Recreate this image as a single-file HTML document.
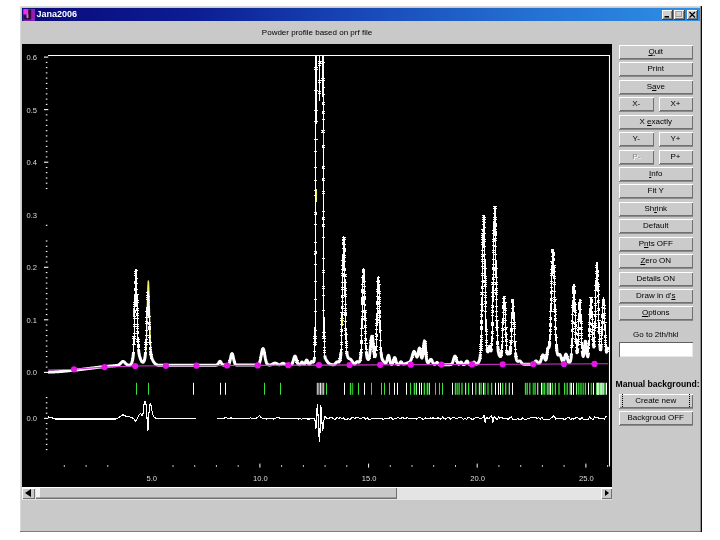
<!DOCTYPE html>
<html><head><meta charset="utf-8"><title>Jana2006</title>
<style>
html,body{margin:0;padding:0;background:#fff;}
body{width:720px;height:540px;position:relative;overflow:hidden;font-family:"Liberation Sans",sans-serif;font-size:8px;color:#000;}
.win{position:absolute;left:20px;top:6px;width:682px;height:526px;background:#c9c9c9;box-shadow:inset -1.3px 0 0 #0a0a0a, inset 0 -1.1px 0 #7c7c7c, inset 1px 1px 0 #dadada;}
.title{position:absolute;left:22px;top:8px;width:677.5px;height:13px;background:linear-gradient(90deg,#0a0a7a 0%,#0c1c92 25%,#1848b8 50%,#2470d2 75%,#2e90e6 100%);}
.tt{position:absolute;left:36.5px;top:8px;height:13px;line-height:13.5px;font-size:9px;font-weight:bold;color:#fff;letter-spacing:0px}
.cap{position:absolute;top:10px;width:11px;height:9.5px;background:#d0d0d0;box-shadow:inset -1px -1px 0 #404040, inset 1px 1px 0 #fff, inset -2px -2px 0 #808080;}
.sub{position:absolute;left:22px;width:590px;top:28px;height:10px;line-height:10px;text-align:center;font-size:8px;}
.plot{position:absolute;left:22px;top:44px;display:block}
.btn{position:absolute;height:14px;line-height:13.4px;text-align:center;font-size:8px;background:#cbcbcb;box-sizing:border-box;box-shadow:inset 1px 1px 0 #fff, inset -1px -1px 0 #707070, 0 1px 0 #8a8a8a;white-space:nowrap}
.btn u{text-decoration:underline}
.btn.dis{color:#888;text-shadow:1px 1px 0 #fff}
.btn.focus i{position:absolute;left:2.5px;right:2.5px;top:0.5px;bottom:0.5px;border-left:1px dotted #000;border-right:1px dotted #000}
.lab{position:absolute;font-size:8px;white-space:nowrap}
.inp{position:absolute;left:619px;top:342px;width:73.5px;height:14.5px;background:#fff;box-sizing:border-box;box-shadow:inset 1px 1px 0 #606060, inset -1px -1px 0 #e8e8e8}
.sb{position:absolute;left:22px;top:486.8px;width:590px;height:13.2px;background:#e4e4e4;border-top:1.6px solid #fff;box-sizing:border-box}
.sbb{position:absolute;top:0;width:12.5px;height:11.6px;background:#c9c9c9;box-shadow:inset 1px 1px 0 #fff, inset -1px -1px 0 #707070}
.thumb{position:absolute;left:13.5px;top:0;width:361.5px;height:11.6px;background:linear-gradient(90deg,#f4f4f4 0,#f4f4f4 4.5px,#c9c9c9 4.5px);box-shadow:inset -1px -1.6px 0 #707070}
.arr{position:absolute;width:0;height:0;border-style:solid}
.wrap{position:absolute;left:0;top:0;width:720px;height:540px;will-change:transform}
</style></head><body><div class="wrap">
<div class="win"></div>
<div class="title"></div>
<svg style="position:absolute;left:22px;top:8px" width="13" height="13" viewBox="22 8 13 13"><rect x="22" y="8" width="13" height="13" fill="#10107c"/><rect x="23.3" y="9" width="11.7" height="11.6" fill="#cc26d4"/><rect x="23.6" y="9.2" width="4.3" height="5.2" fill="#f42cf4"/><rect x="23.3" y="14.6" width="5.4" height="5.1" fill="#2a0a48"/><rect x="28.3" y="9.4" width="3.1" height="10.2" fill="#2a0838"/><rect x="26.5" y="14.2" width="1.9" height="3.8" fill="#c878cc"/><rect x="31.6" y="9" width="3.4" height="10.6" fill="#6a1a98" opacity=".6"/></svg>
<div class="tt">Jana2006</div>
<div class="cap" style="left:662px"><svg width="11" height="10" style="position:absolute;left:0;top:0"><rect x="2.5" y="6" width="4.5" height="1.6" fill="#000"/></svg></div>
<div class="cap" style="left:673.5px"><svg width="11" height="10" style="position:absolute;left:0;top:0"><rect x="2.5" y="2" width="5.5" height="5" fill="none" stroke="#f4f4f4" stroke-width="1"/><rect x="2" y="1.6" width="5.5" height="5" fill="none" stroke="#909090" stroke-width=".9"/></svg></div>
<div class="cap" style="left:687px"><svg width="11" height="10" style="position:absolute;left:0;top:0"><path d="M2.5 2 L8 7.5 M8 2 L2.5 7.5" stroke="#000" stroke-width="1.3" fill="none"/></svg></div>
<div class="sub">Powder profile based on prf file</div>
<svg class="plot" width="590" height="443" viewBox="22 44 590 443">
<defs><clipPath id="cp"><rect x="47" y="55.2" width="563" height="330"/></clipPath></defs>
<rect x="22" y="44" width="590" height="443" fill="#000"/>
<g stroke="#fff" stroke-width="1.1" fill="none">
<line x1="48" x2="610" y1="55.5" y2="55.5"/><line x1="609.5" x2="609.5" y1="55" y2="466.5"/>
<line x1="44" x2="48.3" y1="372.4" y2="372.4"/><line x1="45.8" x2="47.4" y1="367.1" y2="367.1"/><line x1="45.8" x2="47.4" y1="361.9" y2="361.9"/><line x1="45.8" x2="47.4" y1="356.6" y2="356.6"/><line x1="45.8" x2="47.4" y1="351.4" y2="351.4"/><line x1="45.8" x2="47.4" y1="346.1" y2="346.1"/><line x1="45.8" x2="47.4" y1="340.9" y2="340.9"/><line x1="45.8" x2="47.4" y1="335.6" y2="335.6"/><line x1="45.8" x2="47.4" y1="330.4" y2="330.4"/><line x1="45.8" x2="47.4" y1="325.1" y2="325.1"/><line x1="44" x2="48.3" y1="319.8" y2="319.8"/><line x1="45.8" x2="47.4" y1="314.6" y2="314.6"/><line x1="45.8" x2="47.4" y1="309.3" y2="309.3"/><line x1="45.8" x2="47.4" y1="304.1" y2="304.1"/><line x1="45.8" x2="47.4" y1="298.8" y2="298.8"/><line x1="45.8" x2="47.4" y1="293.6" y2="293.6"/><line x1="45.8" x2="47.4" y1="288.3" y2="288.3"/><line x1="45.8" x2="47.4" y1="283.1" y2="283.1"/><line x1="45.8" x2="47.4" y1="277.8" y2="277.8"/><line x1="45.8" x2="47.4" y1="272.6" y2="272.6"/><line x1="44" x2="48.3" y1="267.3" y2="267.3"/><line x1="45.8" x2="47.4" y1="262.0" y2="262.0"/><line x1="45.8" x2="47.4" y1="256.8" y2="256.8"/><line x1="45.8" x2="47.4" y1="251.5" y2="251.5"/><line x1="45.8" x2="47.4" y1="246.3" y2="246.3"/><line x1="45.8" x2="47.4" y1="241.0" y2="241.0"/><line x1="45.8" x2="47.4" y1="225.3" y2="225.3"/><line x1="45.8" x2="47.4" y1="188.5" y2="188.5"/><line x1="45.8" x2="47.4" y1="183.2" y2="183.2"/><line x1="45.8" x2="47.4" y1="178.0" y2="178.0"/><line x1="45.8" x2="47.4" y1="172.7" y2="172.7"/><line x1="45.8" x2="47.4" y1="167.5" y2="167.5"/><line x1="44" x2="48.3" y1="162.2" y2="162.2"/><line x1="45.8" x2="47.4" y1="156.9" y2="156.9"/><line x1="45.8" x2="47.4" y1="151.7" y2="151.7"/><line x1="45.8" x2="47.4" y1="146.4" y2="146.4"/><line x1="45.8" x2="47.4" y1="141.2" y2="141.2"/><line x1="45.8" x2="47.4" y1="135.9" y2="135.9"/><line x1="45.8" x2="47.4" y1="130.7" y2="130.7"/><line x1="45.8" x2="47.4" y1="125.4" y2="125.4"/><line x1="45.8" x2="47.4" y1="120.2" y2="120.2"/><line x1="45.8" x2="47.4" y1="114.9" y2="114.9"/><line x1="44" x2="48.3" y1="109.6" y2="109.6"/><line x1="45.8" x2="47.4" y1="104.4" y2="104.4"/><line x1="45.8" x2="47.4" y1="99.1" y2="99.1"/><line x1="45.8" x2="47.4" y1="93.9" y2="93.9"/><line x1="45.8" x2="47.4" y1="88.6" y2="88.6"/><line x1="45.8" x2="47.4" y1="83.4" y2="83.4"/><line x1="45.8" x2="47.4" y1="78.1" y2="78.1"/><line x1="45.8" x2="47.4" y1="72.9" y2="72.9"/><line x1="45.8" x2="47.4" y1="67.6" y2="67.6"/><line x1="45.8" x2="47.4" y1="62.4" y2="62.4"/><line x1="44" x2="48.3" y1="57.1" y2="57.1"/><line x1="45.8" x2="47.4" y1="449.6" y2="449.6"/><line x1="45.8" x2="47.4" y1="444.4" y2="444.4"/><line x1="45.8" x2="47.4" y1="439.2" y2="439.2"/><line x1="45.8" x2="47.4" y1="434.0" y2="434.0"/><line x1="45.8" x2="47.4" y1="428.8" y2="428.8"/><line x1="45.8" x2="47.4" y1="423.6" y2="423.6"/><line x1="44" x2="48.3" y1="418.4" y2="418.4"/><line x1="45.8" x2="47.4" y1="413.2" y2="413.2"/><line x1="45.8" x2="47.4" y1="408.0" y2="408.0"/><line x1="45.8" x2="47.4" y1="402.8" y2="402.8"/><line x1="45.8" x2="47.4" y1="397.6" y2="397.6"/>
</g>
<g stroke-width="1" fill="none"><line x1="64.3" x2="64.3" y1="465" y2="467" stroke="#c4c4c4"/><line x1="86.1" x2="86.1" y1="465" y2="467" stroke="#c4c4c4"/><line x1="107.8" x2="107.8" y1="465" y2="467" stroke="#c4c4c4"/><line x1="173.0" x2="173.0" y1="465" y2="467" stroke="#c4c4c4"/><line x1="194.7" x2="194.7" y1="465" y2="467" stroke="#c4c4c4"/><line x1="216.4" x2="216.4" y1="465" y2="467" stroke="#c4c4c4"/><line x1="238.2" x2="238.2" y1="465" y2="467" stroke="#c4c4c4"/><line x1="259.9" x2="259.9" y1="463.6" y2="467.6" stroke="#fff"/><line x1="281.6" x2="281.6" y1="465" y2="467" stroke="#c4c4c4"/><line x1="303.4" x2="303.4" y1="465" y2="467" stroke="#c4c4c4"/><line x1="325.1" x2="325.1" y1="465" y2="467" stroke="#c4c4c4"/><line x1="346.8" x2="346.8" y1="465" y2="467" stroke="#c4c4c4"/><line x1="368.6" x2="368.6" y1="463.6" y2="467.6" stroke="#fff"/><line x1="390.3" x2="390.3" y1="465" y2="467" stroke="#c4c4c4"/><line x1="412.0" x2="412.0" y1="465" y2="467" stroke="#c4c4c4"/><line x1="433.7" x2="433.7" y1="465" y2="467" stroke="#c4c4c4"/><line x1="455.5" x2="455.5" y1="465" y2="467" stroke="#c4c4c4"/><line x1="477.2" x2="477.2" y1="463.6" y2="467.6" stroke="#fff"/><line x1="498.9" x2="498.9" y1="465" y2="467" stroke="#c4c4c4"/><line x1="520.7" x2="520.7" y1="465" y2="467" stroke="#c4c4c4"/><line x1="542.4" x2="542.4" y1="465" y2="467" stroke="#c4c4c4"/><line x1="564.1" x2="564.1" y1="465" y2="467" stroke="#c4c4c4"/><line x1="585.9" x2="585.9" y1="463.6" y2="467.6" stroke="#fff"/><line x1="607.6" x2="607.6" y1="465" y2="467" stroke="#c4c4c4"/></g>
<g clip-path="url(#cp)" fill="none" stroke-linejoin="round">
<polyline points="145.6,354.4 145.8,351.3 146.1,347.1 146.3,341.4 146.6,334.2 146.8,325.6 147.1,315.8 147.3,305.6 147.6,296.0 147.8,288.1 148.1,282.8 148.3,280.9 148.6,282.8 148.8,287.9 149.1,295.7 149.3,305.1 149.6,315.0 149.8,324.4 150.1,332.7 150.3,339.5 150.6,344.9 150.8,348.8 151.1,351.6 151.3,353.6 151.6,355.0 151.8,356.1" stroke="#f0f060" stroke-width="1.3"/>
<polyline points="48.0,372.2 48.2,372.2 48.5,372.2 48.8,372.2 49.0,372.1 49.2,372.1 49.5,372.1 49.8,372.1 50.0,372.1 50.2,372.1 50.5,372.1 50.8,372.1 51.0,372.1 51.2,372.0 51.5,372.0 51.8,372.0 52.0,372.0 52.2,372.0 52.5,372.0 52.8,372.0 53.0,371.9 53.2,371.9 53.5,371.9 53.8,371.9 54.0,371.9 54.2,371.9 54.5,371.9 54.8,371.9 55.0,371.9 55.2,371.8 55.5,371.8 55.8,371.8 56.0,371.8 56.2,371.8 56.5,371.8 56.8,371.8 57.0,371.8 57.2,371.7 57.5,371.7 57.8,371.7 58.0,371.7 58.2,371.7 58.5,371.7 58.8,371.7 59.0,371.7 59.2,371.6 59.5,371.6 59.8,371.6 60.0,371.6 60.2,371.6 60.5,371.6 60.8,371.5 61.0,371.5 61.2,371.5 61.5,371.5 61.8,371.4 62.0,371.4 62.2,371.4 62.5,371.4 62.8,371.3 63.0,371.3 63.2,371.3 63.5,371.2 63.8,371.2 64.0,371.2 64.2,371.2 64.5,371.2 64.8,371.1 65.0,371.1 65.2,371.1 65.5,371.1 65.8,371.0 66.0,371.0 66.2,371.0 66.5,371.0 66.8,370.9 67.0,370.9 67.2,370.9 67.5,370.9 67.8,370.8 68.0,370.8 68.2,370.8 68.5,370.8 68.8,370.7 69.0,370.7 69.2,370.7 69.5,370.7 69.8,370.6 70.0,370.6 70.2,370.6 70.5,370.6 70.8,370.5 71.0,370.5 71.2,370.5 71.5,370.5 71.8,370.4 72.0,370.4 72.2,370.4 72.5,370.4 72.8,370.3 73.0,370.3 73.2,370.3 73.5,370.2 73.8,370.2 74.0,370.2 74.2,370.2 74.5,370.2 74.8,370.1 75.0,370.1 75.2,370.1 75.5,370.1 75.8,370.0 76.0,370.0 76.2,370.0 76.5,370.0 76.8,369.9 77.0,369.9 77.2,369.9 77.5,369.9 77.8,369.8 78.0,369.8 78.2,369.8 78.5,369.8 78.8,369.7 79.0,369.7 79.2,369.7 79.5,369.7 79.8,369.6 80.0,369.6 80.2,369.6 80.5,369.5 80.8,369.5 81.0,369.5 81.2,369.4 81.5,369.4 81.8,369.4 82.0,369.4 82.2,369.3 82.5,369.3 82.8,369.3 83.0,369.2 83.2,369.2 83.5,369.2 83.8,369.1 84.0,369.1 84.2,369.1 84.5,369.0 84.8,369.0 85.0,369.0 85.2,368.9 85.5,368.9 85.8,368.9 86.0,368.9 86.2,368.8 86.5,368.8 86.8,368.8 87.0,368.7 87.2,368.7 87.5,368.7 87.8,368.6 88.0,368.6 88.2,368.6 88.5,368.5 88.8,368.5 89.0,368.5 89.2,368.4 89.5,368.4 89.8,368.4 90.0,368.4 90.2,368.3 90.5,368.3 90.8,368.3 91.0,368.2 91.2,368.2 91.5,368.2 91.8,368.1 92.0,368.1 92.2,368.1 92.5,368.0 92.8,368.0 93.0,368.0 93.2,367.9 93.5,367.9 93.8,367.9 94.0,367.9 94.2,367.8 94.5,367.8 94.8,367.8 95.0,367.7 95.2,367.7 95.5,367.7 95.8,367.6 96.0,367.6 96.2,367.6 96.5,367.5 96.8,367.5 97.0,367.5 97.2,367.4 97.5,367.4 97.8,367.4 98.0,367.4 98.2,367.3 98.5,367.3 98.8,367.3 99.0,367.2 99.2,367.2 99.5,367.2 99.8,367.1 100.0,367.1 100.2,367.1 100.5,367.0 100.8,367.0 101.0,367.0 101.2,366.9 101.5,366.9 101.8,366.9 102.0,366.9 102.2,366.8 102.5,366.8 102.8,366.8 103.0,366.7 103.2,366.7 103.5,366.7 103.8,366.6 104.0,366.6 104.2,366.6 104.5,366.6 104.8,366.5 105.0,366.5 105.2,366.5 105.5,366.5 105.8,366.5 106.0,366.4 106.2,366.4 106.5,366.4 106.8,366.4 107.0,366.3 107.2,366.3 107.5,366.3 107.8,366.3 108.0,366.3 108.2,366.2 108.5,366.2 108.8,366.2 109.0,366.2 109.2,366.2 109.5,366.1 109.8,366.1 110.0,366.1 110.2,366.1 110.5,366.1 110.8,366.0 111.0,366.0 111.2,366.0 111.5,366.0 111.8,366.0 112.0,365.9 112.2,365.9 112.5,365.9 112.8,365.9 113.0,365.8 113.2,365.8 113.5,365.8 113.8,365.8 114.0,365.8 114.2,365.7 114.5,365.7 114.8,365.7 115.0,365.7 115.2,365.7 115.5,365.6 115.8,365.6 116.0,365.6 116.2,365.6 116.5,365.5 116.8,365.5 117.0,365.5 117.2,365.4 117.5,365.4 117.8,365.3 118.0,365.3 118.2,365.2 118.5,365.0 118.8,364.9 119.0,364.8 119.2,364.6 119.5,364.4 119.8,364.2 120.0,363.9 120.2,363.7 120.5,363.4 120.8,363.1 121.0,362.9 121.2,362.6 121.5,362.3 121.8,362.1 122.0,361.9 122.2,361.7 122.5,361.6 122.8,361.5 123.0,361.5 123.2,361.5 123.5,361.6 123.8,361.7 124.0,361.9 124.2,362.1 124.5,362.3 124.8,362.5 125.0,362.8 125.2,363.1 125.5,363.4 125.8,363.6 126.0,363.9 126.2,364.1 126.5,364.3 126.8,364.5 127.0,364.7 127.2,364.8 127.5,364.9 127.8,365.0 128.0,365.1 128.2,365.2 128.5,365.2 128.8,365.2 129.0,365.2 129.2,365.2 129.5,365.2 129.8,365.1 130.0,365.0 130.2,364.8 130.5,364.6 130.8,364.4 131.0,364.1 131.2,363.7 131.5,363.2 131.8,362.7 132.0,362.1 132.2,361.3 132.5,360.4 132.8,359.2 133.0,357.7 133.2,355.6 133.5,352.7 133.8,348.5 134.0,342.7 134.2,335.0 134.5,325.2 134.8,313.7 135.0,301.1 135.2,288.9 135.5,278.5 135.8,271.5 136.0,269.0 136.2,271.4 136.5,278.3 136.8,288.4 137.0,300.3 137.2,312.5 137.5,323.6 137.8,332.9 138.0,340.1 138.2,345.5 138.5,349.2 138.8,351.8 139.0,353.6 139.2,354.9 139.5,355.9 139.8,356.8 140.0,357.6 140.2,358.3 140.5,358.9 140.8,359.6 141.0,360.1 141.2,360.6 141.5,361.1 141.8,361.5 142.0,361.8 142.2,362.0 142.5,362.2 142.8,362.2 143.0,362.2 143.2,362.1 143.5,361.9 143.8,361.6 144.0,361.2 144.2,360.7 144.5,359.9 144.8,358.9 145.0,357.6 145.2,355.6 145.5,352.9 145.8,349.2 146.0,344.2 146.2,337.9 146.5,330.3 146.8,321.7 147.0,312.7 147.2,304.3 147.5,297.2 147.8,292.6 148.0,291.0 148.2,292.6 148.5,297.1 148.8,304.0 149.0,312.3 149.2,321.0 149.5,329.3 149.8,336.6 150.0,342.6 150.2,347.3 150.5,350.8 150.8,353.2 151.0,355.0 151.2,356.3 151.5,357.2 151.8,358.0 152.0,358.6 152.2,359.2 152.5,359.7 152.8,360.2 153.0,360.7 153.2,361.2 153.5,361.6 153.8,362.0 154.0,362.4 154.2,362.7 154.5,363.0 154.8,363.3 155.0,363.6 155.2,363.8 155.5,364.0 155.8,364.2 156.0,364.4 156.2,364.5 156.5,364.6 156.8,364.7 157.0,364.8 157.2,364.9 157.5,365.0 157.8,365.0 158.0,365.1 158.2,365.1 158.5,365.2 158.8,365.2 159.0,365.2 159.2,365.2 159.5,365.3 159.8,365.3 160.0,365.3 160.2,365.3 160.5,365.3 160.8,365.3 161.0,365.3 161.2,365.3 161.5,365.3 161.8,365.3 162.0,365.3 162.2,365.3 162.5,365.3 162.8,365.3 163.0,365.3 163.2,365.3 163.5,365.3 163.8,365.3 164.0,365.3 164.2,365.3 164.5,365.3 164.8,365.3 165.0,365.3 165.2,365.3 165.5,365.3 165.8,365.3 166.0,365.3 166.2,365.3 166.5,365.3 166.8,365.3 167.0,365.3 167.2,365.3 167.5,365.3 167.8,365.3 168.0,365.3 168.2,365.3 168.5,365.3 168.8,365.3 169.0,365.3 169.2,365.3 169.5,365.3 169.8,365.3 170.0,365.3 170.2,365.3 170.5,365.3 170.8,365.3 171.0,365.3 171.2,365.3 171.5,365.3 171.8,365.3 172.0,365.3 172.2,365.3 172.5,365.3 172.8,365.3 173.0,365.3 173.2,365.3 173.5,365.3 173.8,365.3 174.0,365.3 174.2,365.3 174.5,365.3 174.8,365.3 175.0,365.3 175.2,365.3 175.5,365.3 175.8,365.3 176.0,365.3 176.2,365.3 176.5,365.3 176.8,365.3 177.0,365.3 177.2,365.3 177.5,365.3 177.8,365.3 178.0,365.3 178.2,365.3 178.5,365.3 178.8,365.3 179.0,365.3 179.2,365.3 179.5,365.3 179.8,365.3 180.0,365.3 180.2,365.3 180.5,365.3 180.8,365.3 181.0,365.3 181.2,365.3 181.5,365.3 181.8,365.3 182.0,365.3 182.2,365.3 182.5,365.3 182.8,365.3 183.0,365.3 183.2,365.3 183.5,365.3 183.8,365.2 184.0,365.2 184.2,365.2 184.5,365.2 184.8,365.2 185.0,365.2 185.2,365.2 185.5,365.2 185.8,365.2 186.0,365.2 186.2,365.2 186.5,365.2 186.8,365.2 187.0,365.2 187.2,365.2 187.5,365.2 187.8,365.2 188.0,365.2 188.2,365.2 188.5,365.2 188.8,365.2 189.0,365.2 189.2,365.2 189.5,365.2 189.8,365.2 190.0,365.2 190.2,365.2 190.5,365.2 190.8,365.2 191.0,365.2 191.2,365.2 191.5,365.2 191.8,365.2 192.0,365.2 192.2,365.2 192.5,365.2 192.8,365.2 193.0,365.2 193.2,365.2 193.5,365.2 193.8,365.2 194.0,365.2 194.2,365.2 194.5,365.2 194.8,365.2 195.0,365.2 195.2,365.2 195.5,365.2 195.8,365.2 196.0,365.2 196.2,365.2 196.5,365.2 196.8,365.2 197.0,365.2 197.2,365.2 197.5,365.2 197.8,365.2 198.0,365.2 198.2,365.2 198.5,365.2 198.8,365.2 199.0,365.2 199.2,365.2 199.5,365.2 199.8,365.2 200.0,365.2 200.2,365.2 200.5,365.2 200.8,365.2 201.0,365.2 201.2,365.2 201.5,365.2 201.8,365.2 202.0,365.2 202.2,365.2 202.5,365.2 202.8,365.2 203.0,365.2 203.2,365.2 203.5,365.2 203.8,365.2 204.0,365.2 204.2,365.2 204.5,365.2 204.8,365.2 205.0,365.2 205.2,365.2 205.5,365.2 205.8,365.2 206.0,365.2 206.2,365.2 206.5,365.2 206.8,365.2 207.0,365.2 207.2,365.2 207.5,365.2 207.8,365.2 208.0,365.2 208.2,365.2 208.5,365.2 208.8,365.2 209.0,365.2 209.2,365.2 209.5,365.2 209.8,365.2 210.0,365.2 210.2,365.2 210.5,365.2 210.8,365.2 211.0,365.2 211.2,365.2 211.5,365.2 211.8,365.2 212.0,365.2 212.2,365.2 212.5,365.2 212.8,365.2 213.0,365.2 213.2,365.2 213.5,365.2 213.8,365.2 214.0,365.2 214.2,365.2 214.5,365.2 214.8,365.2 215.0,365.2 215.2,365.2 215.5,365.2 215.8,365.1 216.0,365.1 216.2,365.1 216.5,365.1 216.8,365.0 217.0,364.9 217.2,364.8 217.5,364.6 217.8,364.3 218.0,364.0 218.2,363.7 218.5,363.2 218.8,362.8 219.0,362.3 219.2,361.9 219.5,361.6 219.8,361.4 220.0,361.3 220.2,361.4 220.5,361.6 220.8,361.9 221.0,362.3 221.2,362.8 221.5,363.2 221.8,363.6 222.0,364.0 222.2,364.3 222.5,364.6 222.8,364.8 223.0,364.9 223.2,365.0 223.5,365.1 223.8,365.1 224.0,365.1 224.2,365.1 224.5,365.1 224.8,365.1 225.0,365.1 225.2,365.1 225.5,365.1 225.8,365.1 226.0,365.1 226.2,365.1 226.5,365.1 226.8,365.1 227.0,365.1 227.2,365.1 227.5,365.0 227.8,365.0 228.0,364.9 228.2,364.8 228.5,364.5 228.8,364.2 229.0,363.8 229.2,363.3 229.5,362.6 229.8,361.7 230.0,360.7 230.2,359.6 230.5,358.4 230.8,357.2 231.0,356.0 231.2,355.0 231.5,354.2 231.8,353.7 232.0,353.5 232.2,353.7 232.5,354.2 232.8,355.0 233.0,356.0 233.2,357.2 233.5,358.4 233.8,359.6 234.0,360.7 234.2,361.7 234.5,362.6 234.8,363.3 235.0,363.8 235.2,364.2 235.5,364.5 235.8,364.7 236.0,364.9 236.2,365.0 236.5,365.0 236.8,365.1 237.0,365.1 237.2,365.1 237.5,365.1 237.8,365.1 238.0,365.1 238.2,365.1 238.5,365.1 238.8,365.1 239.0,365.1 239.2,365.1 239.5,365.1 239.8,365.1 240.0,365.1 240.2,365.1 240.5,365.1 240.8,365.1 241.0,365.1 241.2,365.1 241.5,365.1 241.8,365.1 242.0,365.1 242.2,365.1 242.5,365.1 242.8,365.1 243.0,365.1 243.2,365.1 243.5,365.1 243.8,365.1 244.0,365.1 244.2,365.1 244.5,365.1 244.8,365.1 245.0,365.1 245.2,365.1 245.5,365.1 245.8,365.1 246.0,365.1 246.2,365.1 246.5,365.1 246.8,365.1 247.0,365.1 247.2,365.1 247.5,365.1 247.8,365.1 248.0,365.1 248.2,365.1 248.5,365.1 248.8,365.1 249.0,365.1 249.2,365.1 249.5,365.1 249.8,365.1 250.0,365.1 250.2,365.1 250.5,365.1 250.8,365.1 251.0,365.1 251.2,365.1 251.5,365.1 251.8,365.1 252.0,365.1 252.2,365.1 252.5,365.1 252.8,365.1 253.0,365.1 253.2,365.1 253.5,365.1 253.8,365.1 254.0,365.1 254.2,365.1 254.5,365.1 254.8,365.1 255.0,365.1 255.2,365.1 255.5,365.1 255.8,365.1 256.0,365.1 256.2,365.0 256.5,365.0 256.8,365.0 257.0,365.0 257.2,365.0 257.5,364.9 257.8,364.9 258.0,364.8 258.2,364.6 258.5,364.4 258.8,364.2 259.0,363.8 259.2,363.4 259.5,362.8 259.8,362.1 260.0,361.2 260.2,360.2 260.5,359.1 260.8,357.8 261.0,356.4 261.2,355.0 261.5,353.6 261.8,352.2 262.0,351.0 262.2,350.0 262.5,349.2 262.8,348.7 263.0,348.5 263.2,348.7 263.5,349.2 263.8,349.9 264.0,351.0 264.2,352.2 264.5,353.6 264.8,355.0 265.0,356.4 265.2,357.8 265.5,359.1 265.8,360.2 266.0,361.2 266.2,362.1 266.5,362.8 266.8,363.4 267.0,363.8 267.2,364.2 267.5,364.4 267.8,364.6 268.0,364.7 268.2,364.8 268.5,364.9 268.8,364.9 269.0,365.0 269.2,365.0 269.5,365.0 269.8,365.0 270.0,365.0 270.2,364.9 270.5,364.9 270.8,364.9 271.0,364.8 271.2,364.7 271.5,364.6 271.8,364.5 272.0,364.4 272.2,364.3 272.5,364.2 272.8,364.0 273.0,363.9 273.2,363.7 273.5,363.5 273.8,363.4 274.0,363.3 274.2,363.2 274.5,363.1 274.8,363.0 275.0,363.0 275.2,363.0 275.5,363.1 275.8,363.1 276.0,363.3 276.2,363.4 276.5,363.5 276.8,363.7 277.0,363.8 277.2,364.0 277.5,364.1 277.8,364.3 278.0,364.4 278.2,364.5 278.5,364.6 278.8,364.7 279.0,364.7 279.2,364.7 279.5,364.7 279.8,364.7 280.0,364.6 280.2,364.6 280.5,364.5 280.8,364.4 281.0,364.2 281.2,364.1 281.5,363.9 281.8,363.7 282.0,363.6 282.2,363.5 282.5,363.4 282.8,363.3 283.0,363.3 283.2,363.3 283.5,363.4 283.8,363.5 284.0,363.6 284.2,363.7 284.5,363.9 284.8,364.1 285.0,364.2 285.2,364.4 285.5,364.5 285.8,364.6 286.0,364.7 286.2,364.8 286.5,364.8 286.8,364.9 287.0,364.9 287.2,364.9 287.5,365.0 287.8,365.0 288.0,365.0 288.2,365.0 288.5,365.0 288.8,365.0 289.0,365.0 289.2,365.0 289.5,365.0 289.8,365.0 290.0,365.0 290.2,364.9 290.5,364.9 290.8,364.9 291.0,364.8 291.2,364.7 291.5,364.5 291.8,364.3 292.0,364.0 292.2,363.5 292.5,363.0 292.8,362.4 293.0,361.6 293.2,360.7 293.5,359.8 293.8,358.8 294.0,357.9 294.2,357.1 294.5,356.5 294.8,356.1 295.0,356.0 295.2,356.1 295.5,356.5 295.8,357.1 296.0,357.9 296.2,358.8 296.5,359.8 296.8,360.7 297.0,361.6 297.2,362.3 297.5,363.0 297.8,363.5 298.0,364.0 298.2,364.3 298.5,364.5 298.8,364.7 299.0,364.7 299.2,364.8 299.5,364.8 299.8,364.7 300.0,364.6 300.2,364.4 300.5,364.1 300.8,363.7 301.0,363.2 301.2,362.8 301.5,362.4 301.8,362.1 302.0,362.0 302.2,362.1 302.5,362.4 302.8,362.8 303.0,363.2 303.2,363.6 303.5,364.0 303.8,364.2 304.0,364.3 304.2,364.3 304.5,364.1 304.8,363.8 305.0,363.4 305.2,362.8 305.5,362.2 305.8,361.5 306.0,360.9 306.2,360.4 306.5,360.1 306.8,360.0 307.0,360.2 307.2,360.6 307.5,361.1 307.8,361.8 308.0,362.4 308.2,363.0 308.5,363.6 308.8,364.0 309.0,364.2 309.2,364.3 309.5,364.3 309.8,364.2 310.0,363.9 310.2,363.5 310.5,363.0 310.8,362.5 311.0,362.1 311.2,361.7 311.5,361.5 311.8,361.4 312.0,361.6 312.2,361.8 312.5,362.0 312.8,362.2 313.0,362.3 313.2,362.2 313.5,362.0 313.8,361.7 314.0,361.1 314.2,359.9 314.5,357.6 314.8,352.4 315.0,341.2 315.2,318.2 315.5,274.4 315.8,197.9 316.0,76.7 316.2,30.0 316.5,30.0 316.8,30.0 317.0,30.0 317.2,30.0 317.5,30.0 317.8,30.0 318.0,30.0 318.2,30.0 318.5,30.0 318.8,30.0 319.0,30.0 319.2,44.3 319.5,100.1 319.8,75.8 320.0,30.0 320.2,30.0 320.5,30.0 320.8,30.0 321.0,30.0 321.2,30.0 321.5,30.0 321.8,30.0 322.0,30.0 322.2,30.0 322.5,30.0 322.8,30.0 323.0,30.0 323.2,152.2 323.5,245.0 323.8,300.3 324.0,330.3 324.2,345.3 324.5,352.3 324.8,355.6 325.0,357.1 325.2,358.0 325.5,358.6 325.8,359.1 326.0,359.6 326.2,360.0 326.5,360.5 326.8,360.9 327.0,361.3 327.2,361.6 327.5,361.9 327.8,362.3 328.0,362.5 328.2,362.8 328.5,363.0 328.8,363.3 329.0,363.5 329.2,363.6 329.5,363.8 329.8,363.9 330.0,364.1 330.2,364.2 330.5,364.3 330.8,364.4 331.0,364.5 331.2,364.5 331.5,364.6 331.8,364.6 332.0,364.7 332.2,364.7 332.5,364.7 332.8,364.7 333.0,364.8 333.2,364.8 333.5,364.7 333.8,364.7 334.0,364.7 334.2,364.6 334.5,364.4 334.8,364.3 335.0,364.0 335.2,363.8 335.5,363.5 335.8,363.1 336.0,362.8 336.2,362.5 336.5,362.2 336.8,362.0 337.0,361.9 337.2,361.8 337.5,361.8 337.8,361.9 338.0,362.0 338.2,362.1 338.5,362.1 338.8,362.1 339.0,362.0 339.2,361.7 339.5,361.4 339.8,360.8 340.0,360.1 340.2,359.0 340.5,357.5 340.8,355.3 341.0,352.0 341.2,347.3 341.5,340.8 341.8,332.1 342.0,321.0 342.2,307.7 342.5,292.6 342.8,276.8 343.0,261.7 343.2,248.9 343.5,240.0 343.8,236.1 344.0,237.8 344.2,244.7 344.5,255.9 344.8,270.1 345.0,285.6 345.2,300.8 345.5,314.6 345.8,326.3 346.0,335.7 346.2,342.7 346.5,347.7 346.8,351.2 347.0,353.5 347.2,355.1 347.5,356.2 347.8,356.9 348.0,357.4 348.2,357.9 348.5,358.2 348.8,358.4 349.0,358.6 349.2,358.7 349.5,358.8 349.8,358.9 350.0,359.0 350.2,359.1 350.5,359.2 350.8,359.4 351.0,359.6 351.2,359.9 351.5,360.2 351.8,360.6 352.0,361.0 352.2,361.5 352.5,361.9 352.8,362.3 353.0,362.7 353.2,363.1 353.5,363.4 353.8,363.6 354.0,363.8 354.2,363.9 354.5,363.9 354.8,363.9 355.0,363.7 355.2,363.5 355.5,363.2 355.8,362.9 356.0,362.6 356.2,362.3 356.5,362.0 356.8,361.8 357.0,361.7 357.2,361.6 357.5,361.7 357.8,361.8 358.0,361.9 358.2,362.1 358.5,362.1 358.8,362.2 359.0,362.1 359.2,362.0 359.5,361.7 359.8,361.2 360.0,360.5 360.2,359.5 360.5,358.0 360.8,355.7 361.0,352.4 361.2,347.9 361.5,341.7 361.8,333.7 362.0,324.0 362.2,312.9 362.5,301.0 362.8,289.5 363.0,279.4 363.2,272.1 363.5,268.3 363.8,268.8 364.0,273.2 364.2,281.1 364.5,291.4 364.8,302.9 365.0,314.5 365.2,325.1 365.5,334.3 365.8,341.6 366.0,347.2 366.2,351.3 366.5,354.2 366.8,356.1 367.0,357.4 367.2,358.2 367.5,358.8 367.8,359.2 368.0,359.4 368.2,359.5 368.5,359.4 368.8,359.0 369.0,358.3 369.2,357.3 369.5,355.9 369.8,354.1 370.0,352.0 370.2,349.5 370.5,346.9 370.8,344.2 371.0,341.5 371.2,339.2 371.5,337.5 371.8,336.3 372.0,335.9 372.2,336.4 372.5,337.5 372.8,339.4 373.0,341.7 373.2,344.3 373.5,347.0 373.8,349.6 374.0,352.0 374.2,354.0 374.5,355.5 374.8,356.5 375.0,356.9 375.2,356.6 375.5,355.4 375.8,353.2 376.0,349.6 376.2,344.5 376.5,337.6 376.8,329.1 377.0,319.2 377.2,308.4 377.5,297.7 377.8,288.1 378.0,280.8 378.2,276.7 378.5,276.3 378.8,279.7 379.0,286.3 379.2,295.4 379.5,305.9 379.8,316.5 380.0,326.5 380.2,335.2 380.5,342.3 380.8,347.8 381.0,351.8 381.2,354.6 381.5,356.5 381.8,357.8 382.0,358.7 382.2,359.4 382.5,359.9 382.8,360.3 383.0,360.7 383.2,361.1 383.5,361.4 383.8,361.7 384.0,362.0 384.2,362.3 384.5,362.5 384.8,362.8 385.0,363.0 385.2,363.1 385.5,363.2 385.8,363.1 386.0,363.0 386.2,362.7 386.5,362.1 386.8,361.4 387.0,360.5 387.2,359.3 387.5,358.2 387.8,357.0 388.0,356.1 388.2,355.5 388.5,355.3 388.8,355.6 389.0,356.2 389.2,357.3 389.5,358.5 389.8,359.7 390.0,361.0 390.2,362.0 390.5,362.9 390.8,363.5 391.0,364.0 391.2,364.2 391.5,364.4 391.8,364.4 392.0,364.3 392.2,364.1 392.5,363.7 392.8,363.2 393.0,362.5 393.2,361.6 393.5,360.7 393.8,359.7 394.0,358.8 394.2,358.1 394.5,357.6 394.8,357.5 395.0,357.7 395.2,358.3 395.5,359.1 395.8,360.1 396.0,361.0 396.2,362.0 396.5,362.7 396.8,363.4 397.0,363.8 397.2,364.2 397.5,364.4 397.8,364.5 398.0,364.6 398.2,364.6 398.5,364.5 398.8,364.5 399.0,364.3 399.2,364.1 399.5,363.8 399.8,363.4 400.0,363.0 400.2,362.5 400.5,362.1 400.8,361.8 401.0,361.7 401.2,361.8 401.5,362.0 401.8,362.4 402.0,362.8 402.2,363.2 402.5,363.5 402.8,363.7 403.0,363.9 403.2,364.0 403.5,364.0 403.8,364.0 404.0,364.0 404.2,364.0 404.5,363.9 404.8,363.8 405.0,363.8 405.2,363.7 405.5,363.6 405.8,363.6 406.0,363.5 406.2,363.4 406.5,363.3 406.8,363.2 407.0,363.2 407.2,363.1 407.5,363.0 407.8,362.9 408.0,362.8 408.2,362.7 408.5,362.5 408.8,362.4 409.0,362.3 409.2,362.1 409.5,362.0 409.8,361.8 410.0,361.5 410.2,361.2 410.5,360.9 410.8,360.5 411.0,359.9 411.2,359.3 411.5,358.7 411.8,357.9 412.0,357.0 412.2,356.1 412.5,355.1 412.8,354.2 413.0,353.4 413.2,352.6 413.5,352.0 413.8,351.6 414.0,351.4 414.2,351.5 414.5,351.7 414.8,352.1 415.0,352.7 415.2,353.4 415.5,354.1 415.8,354.9 416.0,355.6 416.2,356.2 416.5,356.7 416.8,357.0 417.0,357.1 417.2,356.9 417.5,356.4 417.8,355.5 418.0,354.4 418.2,353.0 418.5,351.6 418.8,350.1 419.0,349.0 419.2,348.2 419.5,348.0 419.8,348.3 420.0,349.2 420.2,350.6 420.5,352.1 420.8,353.8 421.0,355.3 421.2,356.6 421.5,357.5 421.8,358.1 422.0,358.1 422.2,357.7 422.5,356.7 422.8,355.1 423.0,352.9 423.2,350.4 423.5,347.6 423.8,345.0 424.0,342.8 424.2,341.4 424.5,340.9 424.8,341.6 425.0,343.3 425.2,345.7 425.5,348.6 425.8,351.6 426.0,354.4 426.2,356.8 426.5,358.8 426.8,360.2 427.0,361.3 427.2,361.9 427.5,362.4 427.8,362.6 428.0,362.7 428.2,362.7 428.5,362.6 428.8,362.4 429.0,362.1 429.2,361.7 429.5,361.2 429.8,360.8 430.0,360.3 430.2,359.8 430.5,359.5 430.8,359.3 431.0,359.3 431.2,359.4 431.5,359.7 431.8,360.2 432.0,360.7 432.2,361.3 432.5,361.9 432.8,362.4 433.0,362.9 433.2,363.3 433.5,363.7 433.8,363.9 434.0,364.1 434.2,364.2 434.5,364.3 434.8,364.3 435.0,364.2 435.2,364.1 435.5,363.9 435.8,363.6 436.0,363.3 436.2,363.0 436.5,362.7 436.8,362.5 437.0,362.4 437.2,362.5 437.5,362.7 437.8,363.0 438.0,363.4 438.2,363.7 438.5,364.0 438.8,364.2 439.0,364.4 439.2,364.5 439.5,364.6 439.8,364.6 440.0,364.6 440.2,364.6 440.5,364.7 440.8,364.7 441.0,364.7 441.2,364.7 441.5,364.7 441.8,364.7 442.0,364.7 442.2,364.7 442.5,364.7 442.8,364.7 443.0,364.7 443.2,364.7 443.5,364.7 443.8,364.7 444.0,364.7 444.2,364.7 444.5,364.7 444.8,364.7 445.0,364.7 445.2,364.7 445.5,364.7 445.8,364.7 446.0,364.7 446.2,364.7 446.5,364.7 446.8,364.7 447.0,364.7 447.2,364.7 447.5,364.7 447.8,364.7 448.0,364.7 448.2,364.7 448.5,364.7 448.8,364.7 449.0,364.7 449.2,364.7 449.5,364.7 449.8,364.6 450.0,364.6 450.2,364.6 450.5,364.6 450.8,364.5 451.0,364.5 451.2,364.4 451.5,364.2 451.8,364.0 452.0,363.7 452.2,363.3 452.5,362.8 452.8,362.1 453.0,361.4 453.2,360.5 453.5,359.6 453.8,358.7 454.0,357.9 454.2,357.1 454.5,356.5 454.8,356.1 455.0,356.0 455.2,356.1 455.5,356.5 455.8,357.1 456.0,357.9 456.2,358.7 456.5,359.6 456.8,360.5 457.0,361.4 457.2,362.1 457.5,362.8 457.8,363.3 458.0,363.7 458.2,363.9 458.5,364.1 458.8,364.2 459.0,364.2 459.2,364.0 459.5,363.8 459.8,363.5 460.0,363.1 460.2,362.7 460.5,362.3 460.8,362.1 461.0,362.0 461.2,362.1 461.5,362.3 461.8,362.7 462.0,363.1 462.2,363.5 462.5,363.9 462.8,364.1 463.0,364.3 463.2,364.5 463.5,364.5 463.8,364.5 464.0,364.5 464.2,364.4 464.5,364.3 464.8,364.2 465.0,363.9 465.2,363.6 465.5,363.2 465.8,362.7 466.0,362.2 466.2,361.7 466.5,361.3 466.8,361.1 467.0,361.0 467.2,361.1 467.5,361.3 467.8,361.7 468.0,362.2 468.2,362.7 468.5,363.2 468.8,363.6 469.0,363.9 469.2,364.1 469.5,364.3 469.8,364.4 470.0,364.5 470.2,364.6 470.5,364.6 470.8,364.6 471.0,364.6 471.2,364.6 471.5,364.5 471.8,364.5 472.0,364.3 472.2,364.1 472.5,363.9 472.8,363.5 473.0,363.1 473.2,362.7 473.5,362.3 473.8,362.1 474.0,362.0 474.2,362.1 474.5,362.3 474.8,362.6 475.0,363.0 475.2,363.4 475.5,363.7 475.8,363.9 476.0,364.1 476.2,364.1 476.5,364.1 476.8,364.1 477.0,363.9 477.2,363.8 477.5,363.6 477.8,363.4 478.0,363.1 478.2,362.8 478.5,362.4 478.8,361.9 479.0,361.4 479.2,360.8 479.5,360.1 479.8,359.1 480.0,357.9 480.2,356.1 480.5,353.8 480.8,350.4 481.0,345.7 481.2,339.2 481.5,330.6 481.8,319.7 482.0,306.3 482.2,290.9 482.5,274.1 482.8,257.1 483.0,241.2 483.2,228.1 483.5,219.0 483.8,215.1 484.0,216.8 484.2,223.8 484.5,235.3 484.8,250.0 485.0,266.5 485.2,283.2 485.5,299.0 485.8,312.8 486.0,324.4 486.2,333.5 486.5,340.3 486.8,345.2 487.0,348.6 487.2,350.7 487.5,351.8 487.8,352.2 488.0,351.9 488.2,351.0 488.5,349.9 488.8,348.5 489.0,347.3 489.2,346.5 489.5,346.2 489.8,346.6 490.0,347.4 490.2,348.6 490.5,349.8 490.8,350.6 491.0,350.9 491.2,350.3 491.5,348.4 491.8,345.2 492.0,340.1 492.2,332.8 492.5,323.1 492.8,310.7 493.0,295.9 493.2,279.1 493.5,261.3 493.8,243.8 494.0,228.1 494.2,215.9 494.5,208.5 494.8,206.8 495.0,210.9 495.2,220.4 495.5,234.1 495.8,250.6 496.0,268.2 496.2,285.6 496.5,301.4 496.8,315.1 497.0,326.2 497.2,334.9 497.5,341.3 497.8,345.9 498.0,349.1 498.2,351.3 498.5,352.8 498.8,353.9 499.0,354.7 499.2,355.3 499.5,355.8 499.8,356.1 500.0,356.4 500.2,356.6 500.5,356.6 500.8,356.4 501.0,355.8 501.2,354.8 501.5,353.1 501.8,350.6 502.0,347.0 502.2,342.4 502.5,336.6 502.8,329.8 503.0,322.4 503.2,314.8 503.5,307.7 503.8,301.9 504.0,297.9 504.2,296.2 504.5,297.1 504.8,300.4 505.0,305.8 505.2,312.6 505.5,320.2 505.8,327.9 506.0,335.0 506.2,341.2 506.5,346.3 506.8,350.0 507.0,352.5 507.2,353.9 507.5,354.3 507.8,354.1 508.0,353.6 508.2,353.0 508.5,352.5 508.8,352.4 509.0,352.6 509.2,353.1 509.5,353.6 509.8,353.9 510.0,353.7 510.2,352.7 510.5,350.7 510.8,347.4 511.0,343.0 511.2,337.3 511.5,330.7 511.8,323.4 512.0,316.2 512.2,309.5 512.5,304.2 512.8,300.7 513.0,299.5 513.2,300.8 513.5,304.4 513.8,309.8 514.0,316.5 514.2,323.9 514.5,331.2 514.8,338.0 515.0,343.9 515.2,348.7 515.5,352.5 515.8,355.4 516.0,357.4 516.2,358.8 516.5,359.8 516.8,360.4 517.0,360.8 517.2,361.1 517.5,361.3 517.8,361.3 518.0,361.4 518.2,361.3 518.5,361.2 518.8,361.1 519.0,361.0 519.2,360.9 519.5,360.9 519.8,360.9 520.0,360.9 520.2,361.1 520.5,361.3 520.8,361.6 521.0,362.0 521.2,362.3 521.5,362.7 521.8,363.0 522.0,363.3 522.2,363.5 522.5,363.7 522.8,363.9 523.0,364.0 523.2,364.1 523.5,364.1 523.8,364.2 524.0,364.2 524.2,364.3 524.5,364.3 524.8,364.3 525.0,364.3 525.2,364.3 525.5,364.3 525.8,364.3 526.0,364.3 526.2,364.3 526.5,364.3 526.8,364.3 527.0,364.3 527.2,364.3 527.5,364.3 527.8,364.3 528.0,364.3 528.2,364.3 528.5,364.3 528.8,364.3 529.0,364.3 529.2,364.3 529.5,364.3 529.8,364.3 530.0,364.3 530.2,364.3 530.5,364.3 530.8,364.3 531.0,364.3 531.2,364.3 531.5,364.2 531.8,364.2 532.0,364.2 532.2,364.1 532.5,364.0 532.8,363.9 533.0,363.7 533.2,363.6 533.5,363.3 533.8,363.1 534.0,362.8 534.2,362.5 534.5,362.2 534.8,361.9 535.0,361.6 535.2,361.3 535.5,361.2 535.8,361.0 536.0,361.0 536.2,361.0 536.5,361.2 536.8,361.3 537.0,361.6 537.2,361.8 537.5,362.1 537.8,362.4 538.0,362.7 538.2,362.9 538.5,363.1 538.8,363.3 539.0,363.3 539.2,363.3 539.5,363.1 539.8,362.9 540.0,362.5 540.2,362.1 540.5,361.5 540.8,360.8 541.0,360.0 541.2,359.1 541.5,358.3 541.8,357.4 542.0,356.6 542.2,355.9 542.5,355.3 542.8,355.0 543.0,354.8 543.2,354.9 543.5,355.2 543.8,355.6 544.0,356.3 544.2,357.0 544.5,357.7 544.8,358.5 545.0,359.2 545.2,359.7 545.5,360.1 545.8,360.1 546.0,359.9 546.2,359.2 546.5,358.0 546.8,356.4 547.0,354.4 547.2,352.3 547.5,350.4 547.8,348.8 548.0,347.8 548.2,347.3 548.5,347.4 548.8,347.5 549.0,347.5 549.2,346.9 549.5,345.3 549.8,342.5 550.0,338.4 550.2,332.8 550.5,325.9 550.8,317.7 551.0,308.5 551.2,298.6 551.5,288.4 551.8,278.3 552.0,269.0 552.2,261.0 552.5,254.8 552.8,250.9 553.0,249.6 553.2,250.9 553.5,254.7 553.8,260.8 554.0,268.7 554.2,277.9 554.5,287.8 554.8,297.9 555.0,307.7 555.2,316.8 555.5,324.9 555.8,332.0 556.0,337.9 556.2,342.7 556.5,346.4 556.8,349.3 557.0,351.5 557.2,353.0 557.5,354.0 557.8,354.7 558.0,355.0 558.2,355.1 558.5,355.1 558.8,354.9 559.0,354.7 559.2,354.5 559.5,354.4 559.8,354.4 560.0,354.6 560.2,355.0 560.5,355.6 560.8,356.3 561.0,357.1 561.2,358.0 561.5,358.8 561.8,359.6 562.0,360.3 562.2,360.8 562.5,361.2 562.8,361.5 563.0,361.6 563.2,361.6 563.5,361.3 563.8,360.9 564.0,360.2 564.2,359.4 564.5,358.5 564.8,357.4 565.0,356.4 565.2,355.4 565.5,354.7 565.8,354.2 566.0,354.1 566.2,354.3 566.5,354.8 566.8,355.6 567.0,356.7 567.2,357.8 567.5,358.9 567.8,359.9 568.0,360.8 568.2,361.5 568.5,362.0 568.8,362.3 569.0,362.5 569.2,362.6 569.5,362.5 569.8,362.3 570.0,362.0 570.2,361.6 570.5,360.9 570.8,360.0 571.0,358.5 571.2,356.4 571.5,353.4 571.8,349.1 572.0,343.4 572.2,336.2 572.5,327.6 572.8,318.0 573.0,308.1 573.2,298.8 573.5,291.2 573.8,286.1 574.0,284.3 574.2,286.0 574.5,290.8 574.8,298.2 575.0,307.2 575.2,316.8 575.5,326.1 575.8,334.3 576.0,341.0 576.2,346.2 576.5,349.7 576.8,351.9 577.0,352.7 577.2,352.4 577.5,350.8 577.8,348.1 578.0,344.0 578.2,338.7 578.5,332.1 578.8,324.8 579.0,317.2 579.2,310.1 579.5,304.3 579.8,300.5 580.0,299.3 580.2,300.9 580.5,305.0 580.8,311.1 581.0,318.5 581.2,326.3 581.5,333.9 581.8,340.7 582.0,346.2 582.2,350.6 582.5,353.6 582.8,355.5 583.0,356.4 583.2,356.5 583.5,355.8 583.8,354.3 584.0,352.3 584.2,349.9 584.5,347.2 584.8,344.7 585.0,342.6 585.2,341.2 585.5,340.8 585.8,341.4 586.0,342.9 586.2,345.1 586.5,347.8 586.8,350.5 587.0,353.0 587.2,355.0 587.5,356.3 587.8,356.8 588.0,356.4 588.2,355.0 588.5,352.5 588.8,348.8 589.0,343.8 589.2,337.7 589.5,330.6 589.8,322.9 590.0,315.1 590.2,308.0 590.5,302.2 590.8,298.4 591.0,297.0 591.2,298.1 591.5,301.6 591.8,307.0 592.0,313.6 592.2,320.9 592.5,328.1 592.8,334.5 593.0,339.9 593.2,343.8 593.5,346.3 593.8,347.1 594.0,346.3 594.2,343.7 594.5,339.5 594.8,333.5 595.0,325.9 595.2,316.9 595.5,306.7 595.8,296.1 596.0,285.6 596.2,276.3 596.5,268.9 596.8,264.1 597.0,262.5 597.2,264.2 597.5,269.0 597.8,276.5 598.0,285.8 598.2,296.2 598.5,306.9 598.8,317.0 599.0,326.0 599.2,333.7 599.5,339.8 599.8,344.4 600.0,347.6 600.2,349.5 600.5,350.2 600.8,349.8 601.0,348.2 601.2,345.4 601.5,341.5 601.8,336.4 602.0,330.2 602.2,323.4 602.5,316.3 602.8,309.5 603.0,303.8 603.2,299.7 603.5,297.7 603.8,298.2 604.0,301.0 604.2,305.9 604.5,312.3 604.8,319.5 605.0,327.0 605.2,334.0 605.5,340.3 605.8,345.5 606.0,349.3 606.2,351.5 606.5,352.2 606.8,351.4 607.0,349.8 607.2,348.4 607.5,348.1 607.8,349.4 608.0,352.0" stroke="#fff" stroke-width="1.2" shape-rendering="crispEdges"/>
<g stroke="#fff" stroke-width="3"><polyline points="48.2,372.2 48.8,372.2 49.2,372.1 49.8,372.1 50.2,372.1 50.8,372.1 51.2,372.0 51.8,372.0 52.2,372.0 52.8,372.0 53.2,371.9 53.8,371.9 54.2,371.9 54.8,371.9 55.2,371.8 55.8,371.8 56.2,371.8 56.8,371.8 57.2,371.7 57.8,371.7 58.2,371.7 58.8,371.7 59.2,371.6 59.8,371.6 60.2,371.6 60.8,371.5 61.2,371.5 61.8,371.4 62.2,371.4 62.8,371.3 63.2,371.3 63.8,371.2 64.2,371.2 64.8,371.1 65.2,371.1 65.8,371.0 66.2,371.0 66.8,370.9 67.2,370.9 67.8,370.8 68.2,370.8 68.8,370.7 69.2,370.7 69.8,370.6 70.2,370.6 70.8,370.5 71.2,370.5 71.8,370.4 72.2,370.4 72.8,370.3 73.2,370.3 73.8,370.2 74.2,370.2 74.8,370.1 75.2,370.1 75.8,370.0 76.2,370.0 76.8,369.9 77.2,369.9 77.8,369.8 78.2,369.8 78.8,369.7 79.2,369.7 79.8,369.6 80.2,369.6 80.8,369.5 81.2,369.4 81.8,369.4 82.2,369.3 82.8,369.3 83.2,369.2 83.8,369.1 84.2,369.1 84.8,369.0 85.2,368.9 85.8,368.9 86.2,368.8 86.8,368.8 87.2,368.7 87.8,368.6 88.2,368.6 88.8,368.5 89.2,368.4 89.8,368.4 90.2,368.3 90.8,368.3 91.2,368.2 91.8,368.1 92.2,368.1 92.8,368.0 93.2,367.9 93.8,367.9 94.2,367.8 94.8,367.8 95.2,367.7 95.8,367.6 96.2,367.6 96.8,367.5 97.2,367.4 97.8,367.4 98.2,367.3 98.8,367.3 99.2,367.2 99.8,367.1 100.2,367.1 100.8,367.0 101.2,366.9 101.8,366.9 102.2,366.8 102.8,366.8 103.2,366.7 103.8,366.6 104.2,366.6 104.8,366.5 105.2,366.5 105.8,366.5 106.2,366.4 106.8,366.4 107.2,366.3 107.8,366.3 108.2,366.2 108.8,366.2 109.2,366.2 109.8,366.1 110.2,366.1 110.8,366.0 111.2,366.0 111.8,366.0 112.2,365.9 112.8,365.9 113.2,365.8 113.8,365.8 114.2,365.7 114.8,365.7 115.2,365.7 115.8,365.6 116.2,365.6 116.8,365.5 117.2,365.4 117.8,365.3 118.2,365.2 118.8,364.9 119.2,364.6 119.8,364.2 120.2,363.7 120.8,363.1 121.2,362.6 121.8,362.1 122.2,361.7 122.8,361.5 123.2,361.5 123.8,361.7 124.2,362.1 124.8,362.5 125.2,363.1 125.8,363.6 126.2,364.1 126.8,364.5 127.2,364.8 127.8,365.0 128.2,365.2 128.8,365.2 129.2,365.2 129.8,365.1 130.2,364.8 130.8,364.4 131.2,363.7 131.8,362.7 132.2,361.3 132.8,359.2 133.2,355.6 133.5,352.7"/><polyline points="138.5,349.2 139.0,353.6 139.5,355.9 140.0,357.6 140.5,358.9 141.0,360.1 141.5,361.1 142.0,361.8 142.5,362.2 143.0,362.2 143.5,361.9 144.0,361.2 144.5,359.9 145.0,357.6 145.5,352.9 145.5,352.9"/><polyline points="150.5,350.8 151.0,355.0 151.5,357.2 152.0,358.6 152.5,359.7 153.0,360.7 153.5,361.6 154.0,362.4 154.5,363.0 155.0,363.6 155.5,364.0 156.0,364.4 156.5,364.6 157.0,364.8 157.5,365.0 158.0,365.1 158.5,365.2 159.0,365.2 159.5,365.3 160.0,365.3 160.5,365.3 161.0,365.3 161.5,365.3 162.0,365.3 162.5,365.3 163.0,365.3 163.5,365.3 164.0,365.3 164.5,365.3 165.0,365.3 165.5,365.3 166.0,365.3 166.5,365.3 167.0,365.3 167.5,365.3 168.0,365.3 168.5,365.3 169.0,365.3 169.5,365.3 170.0,365.3 170.5,365.3 171.0,365.3 171.5,365.3 172.0,365.3 172.5,365.3 173.0,365.3 173.5,365.3 174.0,365.3 174.5,365.3 175.0,365.3 175.5,365.3 176.0,365.3 176.5,365.3 177.0,365.3 177.5,365.3 178.0,365.3 178.5,365.3 179.0,365.3 179.5,365.3 180.0,365.3 180.5,365.3 181.0,365.3 181.5,365.3 182.0,365.3 182.5,365.3 183.0,365.3 183.5,365.3 184.0,365.2 184.5,365.2 185.0,365.2 185.5,365.2 186.0,365.2 186.5,365.2 187.0,365.2 187.5,365.2 188.0,365.2 188.5,365.2 189.0,365.2 189.5,365.2 190.0,365.2 190.5,365.2 191.0,365.2 191.5,365.2 192.0,365.2 192.5,365.2 193.0,365.2 193.5,365.2 194.0,365.2 194.5,365.2 195.0,365.2 195.5,365.2 196.0,365.2 196.5,365.2 197.0,365.2 197.5,365.2 198.0,365.2 198.5,365.2 199.0,365.2 199.5,365.2 200.0,365.2 200.5,365.2 201.0,365.2 201.5,365.2 202.0,365.2 202.5,365.2 203.0,365.2 203.5,365.2 204.0,365.2 204.5,365.2 205.0,365.2 205.5,365.2 206.0,365.2 206.5,365.2 207.0,365.2 207.5,365.2 208.0,365.2 208.5,365.2 209.0,365.2 209.5,365.2 210.0,365.2 210.5,365.2 211.0,365.2 211.5,365.2 212.0,365.2 212.5,365.2 213.0,365.2 213.5,365.2 214.0,365.2 214.5,365.2 215.0,365.2 215.5,365.2 216.0,365.1 216.5,365.1 217.0,364.9 217.5,364.6 218.0,364.0 218.5,363.2 219.0,362.3 219.5,361.6 220.0,361.3 220.5,361.6 221.0,362.3 221.5,363.2 222.0,364.0 222.5,364.6 223.0,364.9 223.5,365.1 224.0,365.1 224.5,365.1 225.0,365.1 225.5,365.1 226.0,365.1 226.5,365.1 227.0,365.1 227.5,365.0 228.0,364.9 228.5,364.5 229.0,363.8 229.5,362.6 230.0,360.7 230.5,358.4 231.0,356.0 231.5,354.2 232.0,353.5 232.5,354.2 233.0,356.0 233.5,358.4 234.0,360.7 234.5,362.6 235.0,363.8 235.5,364.5 236.0,364.9 236.5,365.0 237.0,365.1 237.5,365.1 238.0,365.1 238.5,365.1 239.0,365.1 239.5,365.1 240.0,365.1 240.5,365.1 241.0,365.1 241.5,365.1 242.0,365.1 242.5,365.1 243.0,365.1 243.5,365.1 244.0,365.1 244.5,365.1 245.0,365.1 245.5,365.1 246.0,365.1 246.5,365.1 247.0,365.1 247.5,365.1 248.0,365.1 248.5,365.1 249.0,365.1 249.5,365.1 250.0,365.1 250.5,365.1 251.0,365.1 251.5,365.1 252.0,365.1 252.5,365.1 253.0,365.1 253.5,365.1 254.0,365.1 254.5,365.1 255.0,365.1 255.5,365.1 256.0,365.1 256.5,365.0 257.0,365.0 257.5,364.9 258.0,364.8 258.5,364.4 259.0,363.8 259.5,362.8 260.0,361.2 260.5,359.1 261.0,356.4 261.5,353.6 262.0,351.0 262.5,349.2 263.0,348.5 263.5,349.2 264.0,351.0 264.5,353.6 265.0,356.4 265.5,359.1 266.0,361.2 266.5,362.8 267.0,363.8 267.5,364.4 268.0,364.7 268.5,364.9 269.0,365.0 269.5,365.0 270.0,365.0 270.5,364.9 271.0,364.8 271.5,364.6 272.0,364.4 272.5,364.2 273.0,363.9 273.5,363.5 274.0,363.3 274.5,363.1 275.0,363.0 275.5,363.1 276.0,363.3 276.5,363.5 277.0,363.8 277.5,364.1 278.0,364.4 278.5,364.6 279.0,364.7 279.5,364.7 280.0,364.6 280.5,364.5 281.0,364.2 281.5,363.9 282.0,363.6 282.5,363.4 283.0,363.3 283.5,363.4 284.0,363.6 284.5,363.9 285.0,364.2 285.5,364.5 286.0,364.7 286.5,364.8 287.0,364.9 287.5,365.0 288.0,365.0 288.5,365.0 289.0,365.0 289.5,365.0 290.0,365.0 290.5,364.9 291.0,364.8 291.5,364.5 292.0,364.0 292.5,363.0 293.0,361.6 293.5,359.8 294.0,357.9 294.5,356.5 295.0,356.0 295.5,356.5 296.0,357.9 296.5,359.8 297.0,361.6 297.5,363.0 298.0,364.0 298.5,364.5 299.0,364.7 299.5,364.8 300.0,364.6 300.5,364.1 301.0,363.2 301.5,362.4 302.0,362.0 302.5,362.4 303.0,363.2 303.5,364.0 304.0,364.3 304.5,364.1 305.0,363.4 305.5,362.2 306.0,360.9 306.5,360.1 307.0,360.2 307.5,361.1 308.0,362.4 308.5,363.6 309.0,364.2 309.5,364.3 310.0,363.9 310.5,363.0 311.0,362.1 311.5,361.5 312.0,361.6 312.5,362.0 313.0,362.3 313.5,362.0 314.0,361.1 314.5,357.6 314.5,357.6"/><polyline points="324.8,355.6 325.2,358.0 325.8,359.1 326.2,360.0 326.8,360.9 327.2,361.6 327.8,362.3 328.2,362.8 328.8,363.3 329.2,363.6 329.8,363.9 330.2,364.2 330.8,364.4 331.2,364.5 331.8,364.6 332.2,364.7 332.8,364.7 333.2,364.8 333.8,364.7 334.2,364.6 334.8,364.3 335.2,363.8 335.8,363.1 336.2,362.5 336.8,362.0 337.2,361.8 337.8,361.9 338.2,362.1 338.8,362.1 339.2,361.7 339.8,360.8 340.2,359.0 340.8,355.3 341.0,352.0"/><polyline points="346.8,351.2 347.2,355.1 347.8,356.9 348.2,357.9 348.8,358.4 349.2,358.7 349.8,358.9 350.2,359.1 350.8,359.4 351.2,359.9 351.8,360.6 352.2,361.5 352.8,362.3 353.2,363.1 353.8,363.6 354.2,363.9 354.8,363.9 355.2,363.5 355.8,362.9 356.2,362.3 356.8,361.8 357.2,361.6 357.8,361.8 358.2,362.1 358.8,362.2 359.2,362.0 359.8,361.2 360.2,359.5 360.8,355.7 361.0,352.4"/><polyline points="366.2,351.3 366.8,356.1 367.2,358.2 367.8,359.2 368.2,359.5 368.8,359.0 369.2,357.3 369.8,354.1 370.2,349.5 370.8,344.2 371.2,339.2 371.8,336.3 372.2,336.4 372.8,339.4 373.2,344.3 373.8,349.6 374.2,354.0 374.8,356.5 375.2,356.6 375.8,353.2 375.8,353.2"/><polyline points="381.0,351.8 381.5,356.5 382.0,358.7 382.5,359.9 383.0,360.7 383.5,361.4 384.0,362.0 384.5,362.5 385.0,363.0 385.5,363.2 386.0,363.0 386.5,362.1 387.0,360.5 387.5,358.2 388.0,356.1 388.5,355.3 389.0,356.2 389.5,358.5 390.0,361.0 390.5,362.9 391.0,364.0 391.5,364.4 392.0,364.3 392.5,363.7 393.0,362.5 393.5,360.7 394.0,358.8 394.5,357.6 395.0,357.7 395.5,359.1 396.0,361.0 396.5,362.7 397.0,363.8 397.5,364.4 398.0,364.6 398.5,364.5 399.0,364.3 399.5,363.8 400.0,363.0 400.5,362.1 401.0,361.7 401.5,362.0 402.0,362.8 402.5,363.5 403.0,363.9 403.5,364.0 404.0,364.0 404.5,363.9 405.0,363.8 405.5,363.6 406.0,363.5 406.5,363.3 407.0,363.2 407.5,363.0 408.0,362.8 408.5,362.5 409.0,362.3 409.5,362.0 410.0,361.5 410.5,360.9 411.0,359.9 411.5,358.7 412.0,357.0 412.5,355.1 413.0,353.4 413.5,352.0 414.0,351.4 414.5,351.7 415.0,352.7 415.5,354.1 416.0,355.6 416.5,356.7 417.0,357.1 417.5,356.4 418.0,354.4 418.5,351.6 419.0,349.0 419.5,348.0 420.0,349.2 420.5,352.1 421.0,355.3 421.5,357.5 422.0,358.1 422.5,356.7 423.0,352.9 423.5,347.6 424.0,342.8 424.5,340.9 425.0,343.3 425.5,348.6 426.0,354.4 426.5,358.8 427.0,361.3 427.5,362.4 428.0,362.7 428.5,362.6 429.0,362.1 429.5,361.2 430.0,360.3 430.5,359.5 431.0,359.3 431.5,359.7 432.0,360.7 432.5,361.9 433.0,362.9 433.5,363.7 434.0,364.1 434.5,364.3 435.0,364.2 435.5,363.9 436.0,363.3 436.5,362.7 437.0,362.4 437.5,362.7 438.0,363.4 438.5,364.0 439.0,364.4 439.5,364.6 440.0,364.6 440.5,364.7 441.0,364.7 441.5,364.7 442.0,364.7 442.5,364.7 443.0,364.7 443.5,364.7 444.0,364.7 444.5,364.7 445.0,364.7 445.5,364.7 446.0,364.7 446.5,364.7 447.0,364.7 447.5,364.7 448.0,364.7 448.5,364.7 449.0,364.7 449.5,364.7 450.0,364.6 450.5,364.6 451.0,364.5 451.5,364.2 452.0,363.7 452.5,362.8 453.0,361.4 453.5,359.6 454.0,357.9 454.5,356.5 455.0,356.0 455.5,356.5 456.0,357.9 456.5,359.6 457.0,361.4 457.5,362.8 458.0,363.7 458.5,364.1 459.0,364.2 459.5,363.8 460.0,363.1 460.5,362.3 461.0,362.0 461.5,362.3 462.0,363.1 462.5,363.9 463.0,364.3 463.5,364.5 464.0,364.5 464.5,364.3 465.0,363.9 465.5,363.2 466.0,362.2 466.5,361.3 467.0,361.0 467.5,361.3 468.0,362.2 468.5,363.2 469.0,363.9 469.5,364.3 470.0,364.5 470.5,364.6 471.0,364.6 471.5,364.5 472.0,364.3 472.5,363.9 473.0,363.1 473.5,362.3 474.0,362.0 474.5,362.3 475.0,363.0 475.5,363.7 476.0,364.1 476.5,364.1 477.0,363.9 477.5,363.6 478.0,363.1 478.5,362.4 479.0,361.4 479.5,360.1 480.0,357.9 480.5,353.8 480.5,353.8"/><polyline points="487.0,348.6 487.5,351.8 488.0,351.9 488.5,349.9 489.0,347.3 489.5,346.2 490.0,347.4 490.5,349.8 491.0,350.9 491.5,348.4 491.5,348.4"/><polyline points="497.8,345.9 498.2,351.3 498.8,353.9 499.2,355.3 499.8,356.1 500.2,356.6 500.8,356.4 501.2,354.8 501.8,350.6 501.8,350.6"/><polyline points="506.8,350.0 507.2,353.9 507.8,354.1 508.2,353.0 508.8,352.4 509.2,353.1 509.8,353.9 510.2,352.7 510.8,347.4 510.8,347.4"/><polyline points="515.5,352.5 516.0,357.4 516.5,359.8 517.0,360.8 517.5,361.3 518.0,361.4 518.5,361.2 519.0,361.0 519.5,360.9 520.0,360.9 520.5,361.3 521.0,362.0 521.5,362.7 522.0,363.3 522.5,363.7 523.0,364.0 523.5,364.1 524.0,364.2 524.5,364.3 525.0,364.3 525.5,364.3 526.0,364.3 526.5,364.3 527.0,364.3 527.5,364.3 528.0,364.3 528.5,364.3 529.0,364.3 529.5,364.3 530.0,364.3 530.5,364.3 531.0,364.3 531.5,364.2 532.0,364.2 532.5,364.0 533.0,363.7 533.5,363.3 534.0,362.8 534.5,362.2 535.0,361.6 535.5,361.2 536.0,361.0 536.5,361.2 537.0,361.6 537.5,362.1 538.0,362.7 538.5,363.1 539.0,363.3 539.5,363.1 540.0,362.5 540.5,361.5 541.0,360.0 541.5,358.3 542.0,356.6 542.5,355.3 543.0,354.8 543.5,355.2 544.0,356.3 544.5,357.7 545.0,359.2 545.5,360.1 546.0,359.9 546.5,358.0 547.0,354.4 547.5,350.4 548.0,347.8 548.5,347.4 549.0,347.5 549.5,345.3 549.8,342.5"/><polyline points="556.5,346.4 557.0,351.5 557.5,354.0 558.0,355.0 558.5,355.1 559.0,354.7 559.5,354.4 560.0,354.6 560.5,355.6 561.0,357.1 561.5,358.8 562.0,360.3 562.5,361.2 563.0,361.6 563.5,361.3 564.0,360.2 564.5,358.5 565.0,356.4 565.5,354.7 566.0,354.1 566.5,354.8 567.0,356.7 567.5,358.9 568.0,360.8 568.5,362.0 569.0,362.5 569.5,362.5 570.0,362.0 570.5,360.9 571.0,358.5 571.5,353.4 571.5,353.4"/><polyline points="576.5,349.7 577.0,352.7 577.5,350.8 577.8,348.1"/><polyline points="582.2,350.6 582.8,355.5 583.2,356.5 583.8,354.3 584.2,349.9 584.8,344.7 585.2,341.2 585.8,341.4 586.2,345.1 586.8,350.5 587.2,355.0 587.8,356.8 588.2,355.0 588.5,352.5"/><polyline points="593.2,343.8 593.8,347.1 594.2,343.7 594.2,343.7"/><polyline points="599.8,344.4 600.2,349.5 600.8,349.8 601.2,345.4 601.2,345.4"/><polyline points="606.0,349.3 606.5,352.2 607.0,349.8 607.5,348.1 607.8,349.4"/></g>
<g stroke="#fff" stroke-width="1" shape-rendering="crispEdges"><path d="M131.2 358.7h3.2M131.9 352.1h3.2M132.3 344.7h3.2M132.8 336.1l2.8 2.8m-2.8 0l2.8-2.8M132.7 333.8h3.2M133.1 324.2l2.8 2.8m-2.8 0l2.8-2.8M133.3 316.2l2.8 2.8m-2.8 0l2.8-2.8M133.4 310.4l2.8 2.8m-2.8 0l2.8-2.8M133.5 304.1l2.8 2.8m-2.8 0l2.8-2.8M133.4 302.0h3.2M133.7 295.7l2.8 2.8m-2.8 0l2.8-2.8M133.8 288.4l2.8 2.8m-2.8 0l2.8-2.8M134.0 280.9l2.8 2.8m-2.8 0l2.8-2.8M134.0 275.7h3.2M134.3 270.8l2.8 2.8m-2.8 0l2.8-2.8M134.5 270.3h3.2M134.9 278.8h3.2M135.0 283.7h3.2M135.2 289.9h3.2M135.3 294.4h3.2M135.6 300.0l2.8 2.8m-2.8 0l2.8-2.8M135.8 307.9l2.8 2.8m-2.8 0l2.8-2.8M135.9 313.2l2.8 2.8m-2.8 0l2.8-2.8M135.8 318.9h3.2M135.9 324.1h3.2M136.2 326.2l2.8 2.8m-2.8 0l2.8-2.8M136.3 331.4l2.8 2.8m-2.8 0l2.8-2.8M136.6 339.2l2.8 2.8m-2.8 0l2.8-2.8M136.9 344.6l2.8 2.8m-2.8 0l2.8-2.8M137.5 351.6l2.8 2.8m-2.8 0l2.8-2.8M143.0 359.5h3.2M143.9 352.3h3.2M144.4 347.3l2.8 2.8m-2.8 0l2.8-2.8M144.6 342.0l2.8 2.8m-2.8 0l2.8-2.8M144.6 339.8h3.2M144.7 335.4h3.2M144.9 330.9h3.2M145.3 321.4l2.8 2.8m-2.8 0l2.8-2.8M145.3 317.6h3.2M145.4 311.5h3.2M145.6 307.4h3.2M145.8 299.9h3.2M146.2 294.9l2.8 2.8m-2.8 0l2.8-2.8M146.2 292.1h3.2M146.9 296.4h3.2M147.3 300.2l2.8 2.8m-2.8 0l2.8-2.8M147.5 306.4l2.8 2.8m-2.8 0l2.8-2.8M147.6 311.5l2.8 2.8m-2.8 0l2.8-2.8M147.5 316.8h3.2M147.9 322.3l2.8 2.8m-2.8 0l2.8-2.8M148.1 326.6l2.8 2.8m-2.8 0l2.8-2.8M148.3 335.0l2.8 2.8m-2.8 0l2.8-2.8M148.4 342.0h3.2M148.9 347.0l2.8 2.8m-2.8 0l2.8-2.8M149.3 354.2h3.2M150.3 356.4l2.8 2.8m-2.8 0l2.8-2.8M228.5 359.8l2.8 2.8m-2.8 0l2.8-2.8M231.1 354.7h3.2M232.6 361.7h3.2M259.2 357.2l2.8 2.8m-2.8 0l2.8-2.8M259.7 354.5h3.2M260.8 348.9l2.8 2.8m-2.8 0l2.8-2.8M262.8 352.8h3.2M264.6 359.7l2.8 2.8m-2.8 0l2.8-2.8M292.6 357.2h3.2M295.6 360.1l2.8 2.8m-2.8 0l2.8-2.8M306.5 360.8l2.8 2.8m-2.8 0l2.8-2.8M312.9 357.1h3.2M313.2 351.7h3.2M313.6 342.0l2.8 2.8m-2.8 0l2.8-2.8M313.6 336.0l2.8 2.8m-2.8 0l2.8-2.8M313.5 330.0h3.2M313.7 311.5h3.2M313.8 299.7h3.2M313.9 281.3h3.2M313.9 264.7h3.2M314.2 251.5l2.8 2.8m-2.8 0l2.8-2.8M314.0 242.4h3.2M314.1 224.1h3.2M314.3 212.0l2.8 2.8m-2.8 0l2.8-2.8M314.4 195.6l2.8 2.8m-2.8 0l2.8-2.8M314.2 190.8h3.2M314.2 180.8h3.2M314.2 167.4h3.2M314.2 151.0h3.2M314.3 139.4h3.2M314.3 121.6h3.2M314.3 110.0h3.2M314.4 90.1h3.2M314.6 67.1l2.8 2.8m-2.8 0l2.8-2.8M317.7 65.0h3.2M317.8 82.5h3.2M317.9 91.2h3.2M318.0 93.7h3.2M318.1 80.9h3.2M318.4 61.1l2.8 2.8m-2.8 0l2.8-2.8M321.5 62.5h3.2M321.7 78.1l2.8 2.8m-2.8 0l2.8-2.8M321.7 84.8l2.8 2.8m-2.8 0l2.8-2.8M321.7 94.4l2.8 2.8m-2.8 0l2.8-2.8M321.8 102.5l2.8 2.8m-2.8 0l2.8-2.8M321.8 111.4l2.8 2.8m-2.8 0l2.8-2.8M321.6 119.4h3.2M321.8 130.1l2.8 2.8m-2.8 0l2.8-2.8M321.8 145.5l2.8 2.8m-2.8 0l2.8-2.8M321.9 166.0l2.8 2.8m-2.8 0l2.8-2.8M321.9 178.5l2.8 2.8m-2.8 0l2.8-2.8M322.0 191.0l2.8 2.8m-2.8 0l2.8-2.8M321.8 211.7h3.2M322.0 216.9l2.8 2.8m-2.8 0l2.8-2.8M322.0 224.4l2.8 2.8m-2.8 0l2.8-2.8M321.9 237.2h3.2M322.0 258.6h3.2M322.2 269.9l2.8 2.8m-2.8 0l2.8-2.8M322.3 286.2l2.8 2.8m-2.8 0l2.8-2.8M322.1 295.8h3.2M322.2 310.9h3.2M322.4 332.3h3.2M322.7 336.2l2.8 2.8m-2.8 0l2.8-2.8M322.6 341.1h3.2M322.7 347.4h3.2M323.1 350.2l2.8 2.8m-2.8 0l2.8-2.8M338.7 358.2l2.8 2.8m-2.8 0l2.8-2.8M339.2 354.0h3.2M339.6 349.0h3.2M340.0 342.2l2.8 2.8m-2.8 0l2.8-2.8M340.1 335.6h3.2M340.4 329.4l2.8 2.8m-2.8 0l2.8-2.8M340.3 324.8h3.2M340.6 318.3l2.8 2.8m-2.8 0l2.8-2.8M340.7 312.3l2.8 2.8m-2.8 0l2.8-2.8M340.8 306.5l2.8 2.8m-2.8 0l2.8-2.8M340.8 301.3h3.2M341.0 294.9l2.8 2.8m-2.8 0l2.8-2.8M341.2 287.3l2.8 2.8m-2.8 0l2.8-2.8M341.1 282.5h3.2M341.4 272.9l2.8 2.8m-2.8 0l2.8-2.8M341.3 269.6h3.2M341.3 265.3h3.2M341.4 260.4h3.2M341.5 254.5h3.2M341.7 248.0h3.2M342.0 242.5l2.8 2.8m-2.8 0l2.8-2.8M342.2 237.5l2.8 2.8m-2.8 0l2.8-2.8M342.6 237.1l2.8 2.8m-2.8 0l2.8-2.8M342.6 244.6h3.2M343.0 248.6l2.8 2.8m-2.8 0l2.8-2.8M343.1 255.0l2.8 2.8m-2.8 0l2.8-2.8M343.0 261.2h3.2M343.3 267.9l2.8 2.8m-2.8 0l2.8-2.8M343.4 274.1l2.8 2.8m-2.8 0l2.8-2.8M343.4 282.9h3.2M343.7 287.9l2.8 2.8m-2.8 0l2.8-2.8M343.8 294.5l2.8 2.8m-2.8 0l2.8-2.8M343.7 304.0h3.2M344.0 308.1l2.8 2.8m-2.8 0l2.8-2.8M344.1 312.5l2.8 2.8m-2.8 0l2.8-2.8M344.0 321.6h3.2M344.4 327.9l2.8 2.8m-2.8 0l2.8-2.8M344.4 334.9h3.2M344.8 340.9l2.8 2.8m-2.8 0l2.8-2.8M345.0 345.1l2.8 2.8m-2.8 0l2.8-2.8M345.5 351.4l2.8 2.8m-2.8 0l2.8-2.8M358.5 360.0h3.2M359.5 352.3l2.8 2.8m-2.8 0l2.8-2.8M359.5 349.8h3.2M360.1 340.8l2.8 2.8m-2.8 0l2.8-2.8M360.1 335.4h3.2M360.3 328.3h3.2M360.5 319.8h3.2M360.6 316.1h3.2M360.7 311.5h3.2M361.1 301.8l2.8 2.8m-2.8 0l2.8-2.8M361.1 297.7l2.8 2.8m-2.8 0l2.8-2.8M361.3 289.6l2.8 2.8m-2.8 0l2.8-2.8M361.3 284.4h3.2M361.6 278.7l2.8 2.8m-2.8 0l2.8-2.8M361.7 275.0l2.8 2.8m-2.8 0l2.8-2.8M361.9 269.6l2.8 2.8m-2.8 0l2.8-2.8M362.2 269.9h3.2M362.7 275.7l2.8 2.8m-2.8 0l2.8-2.8M362.7 281.6h3.2M362.8 286.7h3.2M363.1 291.2l2.8 2.8m-2.8 0l2.8-2.8M363.2 296.6l2.8 2.8m-2.8 0l2.8-2.8M363.4 303.6l2.8 2.8m-2.8 0l2.8-2.8M363.5 310.2l2.8 2.8m-2.8 0l2.8-2.8M363.7 318.3l2.8 2.8m-2.8 0l2.8-2.8M363.9 324.9l2.8 2.8m-2.8 0l2.8-2.8M364.1 331.1l2.8 2.8m-2.8 0l2.8-2.8M364.3 338.4l2.8 2.8m-2.8 0l2.8-2.8M364.3 343.9h3.2M364.5 349.3h3.2M365.1 352.3l2.8 2.8m-2.8 0l2.8-2.8M367.8 356.2l2.8 2.8m-2.8 0l2.8-2.8M368.7 349.4l2.8 2.8m-2.8 0l2.8-2.8M368.9 346.4h3.2M369.6 340.3l2.8 2.8m-2.8 0l2.8-2.8M371.0 335.4l2.8 2.8m-2.8 0l2.8-2.8M371.8 342.9l2.8 2.8m-2.8 0l2.8-2.8M372.3 351.4h3.2M373.2 354.6l2.8 2.8m-2.8 0l2.8-2.8M374.3 350.3h3.2M374.6 346.2h3.2M374.8 339.4h3.2M375.2 333.8l2.8 2.8m-2.8 0l2.8-2.8M375.1 329.9h3.2M375.5 323.4l2.8 2.8m-2.8 0l2.8-2.8M375.4 319.5h3.2M375.5 315.4h3.2M375.6 308.6h3.2M376.0 301.6l2.8 2.8m-2.8 0l2.8-2.8M375.9 296.9h3.2M376.3 289.1l2.8 2.8m-2.8 0l2.8-2.8M376.5 283.6l2.8 2.8m-2.8 0l2.8-2.8M376.4 281.4h3.2M376.6 277.7h3.2M377.4 279.8l2.8 2.8m-2.8 0l2.8-2.8M377.3 284.7h3.2M377.8 291.3l2.8 2.8m-2.8 0l2.8-2.8M377.9 296.9l2.8 2.8m-2.8 0l2.8-2.8M378.0 300.9l2.8 2.8m-2.8 0l2.8-2.8M377.9 306.6h3.2M378.2 310.6l2.8 2.8m-2.8 0l2.8-2.8M378.3 314.9l2.8 2.8m-2.8 0l2.8-2.8M378.5 319.8l2.8 2.8m-2.8 0l2.8-2.8M378.6 324.7l2.8 2.8m-2.8 0l2.8-2.8M378.8 330.6l2.8 2.8m-2.8 0l2.8-2.8M378.8 340.1h3.2M379.4 346.9l2.8 2.8m-2.8 0l2.8-2.8M379.9 353.8l2.8 2.8m-2.8 0l2.8-2.8M386.1 357.0l2.8 2.8m-2.8 0l2.8-2.8M388.1 359.3h3.2M392.1 359.4l2.8 2.8m-2.8 0l2.8-2.8M394.2 358.2l2.8 2.8m-2.8 0l2.8-2.8M395.3 361.8l2.8 2.8m-2.8 0l2.8-2.8M410.8 355.0l2.8 2.8m-2.8 0l2.8-2.8M414.8 354.6l2.8 2.8m-2.8 0l2.8-2.8M416.9 351.6h3.2M418.7 348.3l2.8 2.8m-2.8 0l2.8-2.8M419.8 357.1h3.2M421.3 353.5h3.2M422.1 345.3h3.2M423.5 341.1l2.8 2.8m-2.8 0l2.8-2.8M423.9 344.8l2.8 2.8m-2.8 0l2.8-2.8M424.5 352.2l2.8 2.8m-2.8 0l2.8-2.8M424.9 355.9l2.8 2.8m-2.8 0l2.8-2.8M451.7 359.5l2.8 2.8m-2.8 0l2.8-2.8M454.3 357.6h3.2M455.4 361.3h3.2M478.7 355.8l2.8 2.8m-2.8 0l2.8-2.8M479.1 351.9l2.8 2.8m-2.8 0l2.8-2.8M479.4 348.1l2.8 2.8m-2.8 0l2.8-2.8M479.6 344.3l2.8 2.8m-2.8 0l2.8-2.8M479.8 338.8l2.8 2.8m-2.8 0l2.8-2.8M479.9 335.0l2.8 2.8m-2.8 0l2.8-2.8M480.2 326.7l2.8 2.8m-2.8 0l2.8-2.8M480.3 320.6l2.8 2.8m-2.8 0l2.8-2.8M480.4 314.5l2.8 2.8m-2.8 0l2.8-2.8M480.3 310.8h3.2M480.4 304.6h3.2M480.7 296.7l2.8 2.8m-2.8 0l2.8-2.8M480.8 292.1l2.8 2.8m-2.8 0l2.8-2.8M480.9 285.9l2.8 2.8m-2.8 0l2.8-2.8M480.8 281.0h3.2M481.1 273.0l2.8 2.8m-2.8 0l2.8-2.8M481.0 266.3h3.2M481.3 259.2l2.8 2.8m-2.8 0l2.8-2.8M481.4 254.5l2.8 2.8m-2.8 0l2.8-2.8M481.2 250.9h3.2M481.6 242.1l2.8 2.8m-2.8 0l2.8-2.8M481.7 237.1l2.8 2.8m-2.8 0l2.8-2.8M481.7 233.1l2.8 2.8m-2.8 0l2.8-2.8M481.8 229.2l2.8 2.8m-2.8 0l2.8-2.8M481.8 224.2h3.2M482.1 219.0l2.8 2.8m-2.8 0l2.8-2.8M482.2 215.3l2.8 2.8m-2.8 0l2.8-2.8M482.7 217.0l2.8 2.8m-2.8 0l2.8-2.8M482.6 222.4h3.2M482.7 227.5h3.2M482.9 233.8h3.2M483.2 239.1l2.8 2.8m-2.8 0l2.8-2.8M483.1 246.9h3.2M483.2 254.5h3.2M483.5 261.4l2.8 2.8m-2.8 0l2.8-2.8M483.6 268.4l2.8 2.8m-2.8 0l2.8-2.8M483.8 275.9l2.8 2.8m-2.8 0l2.8-2.8M483.8 280.1l2.8 2.8m-2.8 0l2.8-2.8M483.9 284.4l2.8 2.8m-2.8 0l2.8-2.8M483.8 292.7h3.2M484.1 295.1l2.8 2.8m-2.8 0l2.8-2.8M484.2 301.4l2.8 2.8m-2.8 0l2.8-2.8M484.0 306.6h3.2M484.1 311.8h3.2M484.5 318.7l2.8 2.8m-2.8 0l2.8-2.8M484.6 323.5l2.8 2.8m-2.8 0l2.8-2.8M484.8 328.8l2.8 2.8m-2.8 0l2.8-2.8M484.7 334.0h3.2M485.2 340.2l2.8 2.8m-2.8 0l2.8-2.8M485.2 345.7h3.2M485.6 350.1h3.2M487.5 346.6l2.8 2.8m-2.8 0l2.8-2.8M489.8 349.2h3.2M490.4 342.7l2.8 2.8m-2.8 0l2.8-2.8M490.5 338.3h3.2M490.9 330.9l2.8 2.8m-2.8 0l2.8-2.8M491.1 322.7l2.8 2.8m-2.8 0l2.8-2.8M491.0 315.8h3.2M491.3 310.4l2.8 2.8m-2.8 0l2.8-2.8M491.4 304.8l2.8 2.8m-2.8 0l2.8-2.8M491.6 296.4l2.8 2.8m-2.8 0l2.8-2.8M491.7 290.0l2.8 2.8m-2.8 0l2.8-2.8M491.8 282.1l2.8 2.8m-2.8 0l2.8-2.8M491.9 277.2l2.8 2.8m-2.8 0l2.8-2.8M491.7 274.1h3.2M492.0 267.5l2.8 2.8m-2.8 0l2.8-2.8M491.9 264.1h3.2M491.9 259.4h3.2M492.2 250.3l2.8 2.8m-2.8 0l2.8-2.8M492.1 245.1h3.2M492.4 239.5l2.8 2.8m-2.8 0l2.8-2.8M492.5 233.5l2.8 2.8m-2.8 0l2.8-2.8M492.4 230.6h3.2M492.5 223.5h3.2M492.6 219.0h3.2M492.7 213.9h3.2M493.4 206.1l2.8 2.8m-2.8 0l2.8-2.8M493.7 213.6l2.8 2.8m-2.8 0l2.8-2.8M493.8 217.1l2.8 2.8m-2.8 0l2.8-2.8M493.9 223.6l2.8 2.8m-2.8 0l2.8-2.8M494.0 229.0l2.8 2.8m-2.8 0l2.8-2.8M494.1 232.6l2.8 2.8m-2.8 0l2.8-2.8M494.2 238.0l2.8 2.8m-2.8 0l2.8-2.8M494.1 246.5h3.2M494.2 254.9h3.2M494.5 261.6l2.8 2.8m-2.8 0l2.8-2.8M494.6 268.4l2.8 2.8m-2.8 0l2.8-2.8M494.5 277.3h3.2M494.8 282.4l2.8 2.8m-2.8 0l2.8-2.8M494.9 288.5l2.8 2.8m-2.8 0l2.8-2.8M495.0 292.4l2.8 2.8m-2.8 0l2.8-2.8M494.9 299.1h3.2M495.0 306.4h3.2M495.1 311.4h3.2M495.2 316.3h3.2M495.3 320.1h3.2M495.4 327.0h3.2M495.7 335.4h3.2M496.2 341.7l2.8 2.8m-2.8 0l2.8-2.8M496.5 349.6h3.2M499.4 355.9h3.2M500.3 349.9l2.8 2.8m-2.8 0l2.8-2.8M500.7 343.7l2.8 2.8m-2.8 0l2.8-2.8M500.7 341.6h3.2M500.9 337.2h3.2M501.4 327.8l2.8 2.8m-2.8 0l2.8-2.8M501.4 322.6h3.2M501.5 318.6h3.2M501.7 312.3h3.2M502.1 305.6l2.8 2.8m-2.8 0l2.8-2.8M502.1 302.4h3.2M502.7 296.0l2.8 2.8m-2.8 0l2.8-2.8M503.3 302.9h3.2M503.7 308.2l2.8 2.8m-2.8 0l2.8-2.8M503.7 314.2h3.2M503.9 320.7h3.2M504.4 327.2l2.8 2.8m-2.8 0l2.8-2.8M504.4 334.2h3.2M504.8 338.9l2.8 2.8m-2.8 0l2.8-2.8M504.9 345.3h3.2M505.5 350.4l2.8 2.8m-2.8 0l2.8-2.8M508.9 350.7l2.8 2.8m-2.8 0l2.8-2.8M509.3 346.6l2.8 2.8m-2.8 0l2.8-2.8M509.7 340.1l2.8 2.8m-2.8 0l2.8-2.8M509.7 336.8h3.2M510.1 328.7l2.8 2.8m-2.8 0l2.8-2.8M510.2 322.9h3.2M510.6 315.6l2.8 2.8m-2.8 0l2.8-2.8M510.7 308.7h3.2M511.3 299.6l2.8 2.8m-2.8 0l2.8-2.8M512.0 306.1h3.2M512.5 311.7l2.8 2.8m-2.8 0l2.8-2.8M512.7 317.6l2.8 2.8m-2.8 0l2.8-2.8M512.8 322.1l2.8 2.8m-2.8 0l2.8-2.8M513.0 326.0l2.8 2.8m-2.8 0l2.8-2.8M513.0 334.0h3.2M513.3 341.3h3.2M513.7 349.2h3.2M514.3 356.3h3.2M540.2 356.4l2.8 2.8m-2.8 0l2.8-2.8M545.2 355.9l2.8 2.8m-2.8 0l2.8-2.8M545.7 352.0l2.8 2.8m-2.8 0l2.8-2.8M546.1 348.9h3.2M548.3 341.6l2.8 2.8m-2.8 0l2.8-2.8M548.7 334.4l2.8 2.8m-2.8 0l2.8-2.8M548.9 328.8l2.8 2.8m-2.8 0l2.8-2.8M549.1 323.5l2.8 2.8m-2.8 0l2.8-2.8M549.3 317.0l2.8 2.8m-2.8 0l2.8-2.8M549.3 311.5h3.2M549.5 303.2h3.2M549.8 297.9l2.8 2.8m-2.8 0l2.8-2.8M550.0 290.8l2.8 2.8m-2.8 0l2.8-2.8M549.9 287.9h3.2M550.2 281.2l2.8 2.8m-2.8 0l2.8-2.8M550.5 273.1l2.8 2.8m-2.8 0l2.8-2.8M550.4 269.6h3.2M550.8 261.2l2.8 2.8m-2.8 0l2.8-2.8M550.8 256.2h3.2M551.3 249.6l2.8 2.8m-2.8 0l2.8-2.8M552.1 252.8l2.8 2.8m-2.8 0l2.8-2.8M552.3 258.4l2.8 2.8m-2.8 0l2.8-2.8M552.5 265.2l2.8 2.8m-2.8 0l2.8-2.8M552.5 271.5h3.2M552.8 276.0l2.8 2.8m-2.8 0l2.8-2.8M553.0 282.2l2.8 2.8m-2.8 0l2.8-2.8M553.0 291.8h3.2M553.1 297.0h3.2M553.4 299.2l2.8 2.8m-2.8 0l2.8-2.8M553.6 304.5l2.8 2.8m-2.8 0l2.8-2.8M553.7 309.2l2.8 2.8m-2.8 0l2.8-2.8M553.8 314.6l2.8 2.8m-2.8 0l2.8-2.8M553.9 318.4l2.8 2.8m-2.8 0l2.8-2.8M554.2 326.8l2.8 2.8m-2.8 0l2.8-2.8M554.2 334.0h3.2M554.7 337.5l2.8 2.8m-2.8 0l2.8-2.8M555.1 344.4l2.8 2.8m-2.8 0l2.8-2.8M555.4 348.4l2.8 2.8m-2.8 0l2.8-2.8M559.5 357.6h3.2M563.0 357.9h3.2M565.8 356.1l2.8 2.8m-2.8 0l2.8-2.8M566.8 359.9l2.8 2.8m-2.8 0l2.8-2.8M569.8 354.6h3.2M570.5 345.3l2.8 2.8m-2.8 0l2.8-2.8M570.6 338.7h3.2M571.0 328.8l2.8 2.8m-2.8 0l2.8-2.8M571.2 320.8l2.8 2.8m-2.8 0l2.8-2.8M571.2 314.8h3.2M571.6 305.0l2.8 2.8m-2.8 0l2.8-2.8M571.8 300.5l2.8 2.8m-2.8 0l2.8-2.8M571.7 297.0h3.2M572.1 290.7l2.8 2.8m-2.8 0l2.8-2.8M572.3 286.6l2.8 2.8m-2.8 0l2.8-2.8M572.7 286.5h3.2M573.1 290.5l2.8 2.8m-2.8 0l2.8-2.8M573.2 299.8h3.2M573.5 302.0l2.8 2.8m-2.8 0l2.8-2.8M573.7 310.3l2.8 2.8m-2.8 0l2.8-2.8M573.6 315.8h3.2M574.0 322.5l2.8 2.8m-2.8 0l2.8-2.8M574.1 326.2l2.8 2.8m-2.8 0l2.8-2.8M574.3 331.8l2.8 2.8m-2.8 0l2.8-2.8M574.6 339.1l2.8 2.8m-2.8 0l2.8-2.8M574.8 347.9h3.2M576.0 349.8l2.8 2.8m-2.8 0l2.8-2.8M576.4 344.2h3.2M576.8 338.8l2.8 2.8m-2.8 0l2.8-2.8M577.0 333.4l2.8 2.8m-2.8 0l2.8-2.8M577.2 327.5l2.8 2.8m-2.8 0l2.8-2.8M577.5 319.2l2.8 2.8m-2.8 0l2.8-2.8M577.5 314.3h3.2M577.9 306.6l2.8 2.8m-2.8 0l2.8-2.8M578.1 302.4l2.8 2.8m-2.8 0l2.8-2.8M578.9 300.4l2.8 2.8m-2.8 0l2.8-2.8M579.1 309.2h3.2M579.5 313.8l2.8 2.8m-2.8 0l2.8-2.8M579.7 321.3l2.8 2.8m-2.8 0l2.8-2.8M579.9 327.3l2.8 2.8m-2.8 0l2.8-2.8M580.1 333.0l2.8 2.8m-2.8 0l2.8-2.8M580.1 338.0h3.2M580.5 342.4l2.8 2.8m-2.8 0l2.8-2.8M580.8 351.9h3.2M582.0 355.0h3.2M583.1 345.3l2.8 2.8m-2.8 0l2.8-2.8M584.5 343.6h3.2M585.1 346.9l2.8 2.8m-2.8 0l2.8-2.8M585.5 350.8l2.8 2.8m-2.8 0l2.8-2.8M586.8 353.5h3.2M587.4 346.6l2.8 2.8m-2.8 0l2.8-2.8M587.6 341.6l2.8 2.8m-2.8 0l2.8-2.8M587.9 334.0l2.8 2.8m-2.8 0l2.8-2.8M588.1 328.7l2.8 2.8m-2.8 0l2.8-2.8M588.3 322.3l2.8 2.8m-2.8 0l2.8-2.8M588.5 316.6l2.8 2.8m-2.8 0l2.8-2.8M588.4 314.0h3.2M588.8 308.4l2.8 2.8m-2.8 0l2.8-2.8M588.8 305.0h3.2M589.3 297.6h3.2M590.1 299.8l2.8 2.8m-2.8 0l2.8-2.8M590.4 306.4l2.8 2.8m-2.8 0l2.8-2.8M590.4 314.4h3.2M590.6 319.2h3.2M591.0 323.5l2.8 2.8m-2.8 0l2.8-2.8M590.9 329.3h3.2M591.3 331.7l2.8 2.8m-2.8 0l2.8-2.8M591.4 339.4h3.2M591.6 343.1h3.2M592.7 343.8l2.8 2.8m-2.8 0l2.8-2.8M592.8 341.5h3.2M593.0 337.4h3.2M593.2 330.9h3.2M593.6 324.9l2.8 2.8m-2.8 0l2.8-2.8M593.7 320.8l2.8 2.8m-2.8 0l2.8-2.8M593.9 313.9l2.8 2.8m-2.8 0l2.8-2.8M593.8 311.5h3.2M594.1 303.3l2.8 2.8m-2.8 0l2.8-2.8M594.1 297.6h3.2M594.3 290.9h3.2M594.6 285.4l2.8 2.8m-2.8 0l2.8-2.8M594.5 282.0h3.2M594.6 278.5h3.2M595.0 271.0l2.8 2.8m-2.8 0l2.8-2.8M595.2 265.2l2.8 2.8m-2.8 0l2.8-2.8M595.7 261.6l2.8 2.8m-2.8 0l2.8-2.8M596.2 269.8l2.8 2.8m-2.8 0l2.8-2.8M596.3 273.7l2.8 2.8m-2.8 0l2.8-2.8M596.2 279.0h3.2M596.6 284.2l2.8 2.8m-2.8 0l2.8-2.8M596.5 290.0h3.2M596.8 294.6l2.8 2.8m-2.8 0l2.8-2.8M597.0 300.3l2.8 2.8m-2.8 0l2.8-2.8M597.2 308.4l2.8 2.8m-2.8 0l2.8-2.8M597.1 314.6h3.2M597.3 320.8h3.2M597.4 327.1h3.2M597.8 331.2l2.8 2.8m-2.8 0l2.8-2.8M598.1 338.9l2.8 2.8m-2.8 0l2.8-2.8M598.1 344.4h3.2M598.8 350.0h3.2M599.7 344.9h3.2M600.1 338.2h3.2M600.4 332.8l2.8 2.8m-2.8 0l2.8-2.8M600.4 329.0h3.2M600.9 320.9l2.8 2.8m-2.8 0l2.8-2.8M601.1 314.4l2.8 2.8m-2.8 0l2.8-2.8M601.2 307.4h3.2M601.8 299.3l2.8 2.8m-2.8 0l2.8-2.8M602.5 298.6l2.8 2.8m-2.8 0l2.8-2.8M602.6 305.1h3.2M602.8 308.9h3.2M603.2 313.1l2.8 2.8m-2.8 0l2.8-2.8M603.1 318.3h3.2M603.3 322.7h3.2M603.7 328.7l2.8 2.8m-2.8 0l2.8-2.8M603.9 334.8l2.8 2.8m-2.8 0l2.8-2.8M604.2 340.3l2.8 2.8m-2.8 0l2.8-2.8M604.3 344.0l2.8 2.8m-2.8 0l2.8-2.8M604.5 350.3h3.2M606.2 347.2l2.8 2.8m-2.8 0l2.8-2.8"/></g>
<g stroke="#f0f060" stroke-width="1" shape-rendering="crispEdges"><line x1="323.5" x2="323.5" y1="130" y2="145"/><line x1="316.5" x2="316.5" y1="189" y2="202"/><line x1="133.5" x2="133.5" y1="308" y2="316"/><line x1="342.5" x2="342.5" y1="318" y2="326"/></g>
<polyline points="48.0,370.0 74.0,369.3 104.5,367.1 135.5,366.0 165.0,365.8 320.0,365.1 608.0,363.8" stroke="#d636d6" stroke-width="1.15"/>
</g>
<g fill="#e516e5"><circle cx="74.0" cy="369.3" r="3.1"/><circle cx="104.6" cy="367.1" r="3.1"/><circle cx="135.2" cy="366.0" r="3.1"/><circle cx="165.9" cy="365.8" r="3.1"/><circle cx="196.5" cy="365.7" r="3.1"/><circle cx="227.1" cy="365.5" r="3.1"/><circle cx="257.7" cy="365.4" r="3.1"/><circle cx="288.3" cy="365.2" r="3.1"/><circle cx="319.0" cy="365.1" r="3.1"/><circle cx="349.6" cy="365.0" r="3.1"/><circle cx="380.2" cy="364.8" r="3.1"/><circle cx="410.8" cy="364.7" r="3.1"/><circle cx="441.4" cy="364.6" r="3.1"/><circle cx="472.1" cy="364.4" r="3.1"/><circle cx="502.7" cy="364.3" r="3.1"/><circle cx="533.3" cy="364.1" r="3.1"/><circle cx="563.9" cy="364.0" r="3.1"/><circle cx="594.5" cy="363.9" r="3.1"/></g>
<g><line x1="136.5" x2="136.5" y1="382.8" y2="394.8" stroke="#3ae03a" stroke-width="1.0"/><line x1="148.5" x2="148.5" y1="382.8" y2="394.8" stroke="#3ae03a" stroke-width="1.0"/><line x1="193.5" x2="193.5" y1="382.8" y2="394.8" stroke="#ffffff" stroke-width="1.0"/><line x1="220.5" x2="220.5" y1="382.8" y2="394.8" stroke="#ffffff" stroke-width="1.0"/><line x1="225.5" x2="225.5" y1="382.8" y2="394.8" stroke="#ffffff" stroke-width="1.0"/><line x1="264.5" x2="264.5" y1="382.8" y2="394.8" stroke="#3ae03a" stroke-width="1.0"/><line x1="280.5" x2="280.5" y1="382.8" y2="394.8" stroke="#3ae03a" stroke-width="1.0"/><line x1="317.3" x2="317.3" y1="382.8" y2="394.8" stroke="#ffffff" stroke-width="0.9"/><line x1="318.9" x2="318.9" y1="382.8" y2="394.8" stroke="#ffffff" stroke-width="0.9"/><line x1="320.5" x2="320.5" y1="382.8" y2="394.8" stroke="#ffffff" stroke-width="0.9"/><line x1="322.1" x2="322.1" y1="382.8" y2="394.8" stroke="#ffffff" stroke-width="0.9"/><line x1="323.7" x2="323.7" y1="382.8" y2="394.8" stroke="#ffffff" stroke-width="0.9"/><line x1="326.5" x2="326.5" y1="382.8" y2="394.8" stroke="#3ae03a" stroke-width="1.0"/><line x1="344.5" x2="344.5" y1="382.8" y2="394.8" stroke="#ffffff" stroke-width="1.0"/><line x1="350.5" x2="350.5" y1="382.8" y2="394.8" stroke="#3ae03a" stroke-width="1.2"/><line x1="352.5" x2="352.5" y1="382.8" y2="394.8" stroke="#22aa22" stroke-width="1.5"/><line x1="358.5" x2="358.5" y1="382.8" y2="394.8" stroke="#3ae03a" stroke-width="1.0"/><line x1="364.5" x2="364.5" y1="382.8" y2="394.8" stroke="#ffffff" stroke-width="1.0"/><line x1="371.5" x2="371.5" y1="382.8" y2="394.8" stroke="#3ae03a" stroke-width="1.0"/><line x1="381.5" x2="381.5" y1="382.8" y2="394.8" stroke="#3ae03a" stroke-width="1.0"/><line x1="384.5" x2="384.5" y1="382.8" y2="394.8" stroke="#3ae03a" stroke-width="1.0"/><line x1="389.5" x2="389.5" y1="382.8" y2="394.8" stroke="#3ae03a" stroke-width="1.0"/><line x1="394.5" x2="394.5" y1="382.8" y2="394.8" stroke="#ffffff" stroke-width="1.0"/><line x1="397.5" x2="397.5" y1="382.8" y2="394.8" stroke="#ffffff" stroke-width="1.0"/><line x1="406.5" x2="406.5" y1="382.8" y2="394.8" stroke="#ffffff" stroke-width="1.0"/><line x1="410.5" x2="410.5" y1="382.8" y2="394.8" stroke="#3ae03a" stroke-width="1.0"/><line x1="414.5" x2="414.5" y1="382.8" y2="394.8" stroke="#3ae03a" stroke-width="1.6"/><line x1="416.5" x2="416.5" y1="382.8" y2="394.8" stroke="#98f498" stroke-width="1.0"/><line x1="419.5" x2="419.5" y1="382.8" y2="394.8" stroke="#ffffff" stroke-width="1.0"/><line x1="421.5" x2="421.5" y1="382.8" y2="394.8" stroke="#ffffff" stroke-width="1.0"/><line x1="424.4" x2="424.4" y1="382.8" y2="394.8" stroke="#3ae03a" stroke-width="1.4"/><line x1="427.5" x2="427.5" y1="382.8" y2="394.8" stroke="#3ae03a" stroke-width="1.8"/><line x1="429.5" x2="429.5" y1="382.8" y2="394.8" stroke="#98f498" stroke-width="1.0"/><line x1="435.5" x2="435.5" y1="382.8" y2="394.8" stroke="#3ae03a" stroke-width="1.0"/><line x1="439.5" x2="439.5" y1="382.8" y2="394.8" stroke="#3ae03a" stroke-width="1.0"/><line x1="442.5" x2="442.5" y1="382.8" y2="394.8" stroke="#3ae03a" stroke-width="1.0"/><line x1="452.5" x2="452.5" y1="382.8" y2="394.8" stroke="#ffffff" stroke-width="1.0"/><line x1="455.6" x2="455.6" y1="382.8" y2="394.8" stroke="#3ae03a" stroke-width="1.6"/><line x1="457.5" x2="457.5" y1="382.8" y2="394.8" stroke="#22aa22" stroke-width="1.6"/><line x1="459.2" x2="459.2" y1="382.8" y2="394.8" stroke="#3ae03a" stroke-width="1.2"/><line x1="462.0" x2="462.0" y1="382.8" y2="394.8" stroke="#3ae03a" stroke-width="1.3"/><line x1="465.6" x2="465.6" y1="382.8" y2="394.8" stroke="#98f498" stroke-width="1.2"/><line x1="468.6" x2="468.6" y1="382.8" y2="394.8" stroke="#3ae03a" stroke-width="1.3"/><line x1="472.5" x2="472.5" y1="382.8" y2="394.8" stroke="#ffffff" stroke-width="1.0"/><line x1="475.8" x2="475.8" y1="382.8" y2="394.8" stroke="#3ae03a" stroke-width="1.3"/><line x1="479.4" x2="479.4" y1="382.8" y2="394.8" stroke="#98f498" stroke-width="1.2"/><line x1="481.1" x2="481.1" y1="382.8" y2="394.8" stroke="#3ae03a" stroke-width="1.3"/><line x1="483.5" x2="483.5" y1="382.8" y2="394.8" stroke="#ffffff" stroke-width="1.0"/><line x1="485.0" x2="485.0" y1="382.8" y2="394.8" stroke="#3ae03a" stroke-width="1.3"/><line x1="488.0" x2="488.0" y1="382.8" y2="394.8" stroke="#22aa22" stroke-width="1.6"/><line x1="491.6" x2="491.6" y1="382.8" y2="394.8" stroke="#3ae03a" stroke-width="1.3"/><line x1="495.5" x2="495.5" y1="382.8" y2="394.8" stroke="#ffffff" stroke-width="1.0"/><line x1="498.5" x2="498.5" y1="382.8" y2="394.8" stroke="#ffffff" stroke-width="1.0"/><line x1="500.5" x2="500.5" y1="382.8" y2="394.8" stroke="#ffffff" stroke-width="1.0"/><line x1="502.7" x2="502.7" y1="382.8" y2="394.8" stroke="#3ae03a" stroke-width="1.3"/><line x1="505.7" x2="505.7" y1="382.8" y2="394.8" stroke="#3ae03a" stroke-width="1.3"/><line x1="509.3" x2="509.3" y1="382.8" y2="394.8" stroke="#98f498" stroke-width="1.2"/><line x1="512.5" x2="512.5" y1="382.8" y2="394.8" stroke="#ffffff" stroke-width="1.0"/><line x1="525.5" x2="525.5" y1="382.8" y2="394.8" stroke="#3ae03a" stroke-width="1.3"/><line x1="527.2" x2="527.2" y1="382.8" y2="394.8" stroke="#3ae03a" stroke-width="1.3"/><line x1="529.8" x2="529.8" y1="382.8" y2="394.8" stroke="#3ae03a" stroke-width="1.3"/><line x1="533.4" x2="533.4" y1="382.8" y2="394.8" stroke="#22aa22" stroke-width="1.6"/><line x1="535.1" x2="535.1" y1="382.8" y2="394.8" stroke="#3ae03a" stroke-width="1.3"/><line x1="537.7" x2="537.7" y1="382.8" y2="394.8" stroke="#98f498" stroke-width="1.2"/><line x1="541.5" x2="541.5" y1="382.8" y2="394.8" stroke="#ffffff" stroke-width="1.0"/><line x1="543.0" x2="543.0" y1="382.8" y2="394.8" stroke="#3ae03a" stroke-width="1.3"/><line x1="544.7" x2="544.7" y1="382.8" y2="394.8" stroke="#3ae03a" stroke-width="1.3"/><line x1="547.3" x2="547.3" y1="382.8" y2="394.8" stroke="#3ae03a" stroke-width="1.3"/><line x1="549.0" x2="549.0" y1="382.8" y2="394.8" stroke="#98f498" stroke-width="1.2"/><line x1="550.5" x2="550.5" y1="382.8" y2="394.8" stroke="#ffffff" stroke-width="1.0"/><line x1="552.4" x2="552.4" y1="382.8" y2="394.8" stroke="#3ae03a" stroke-width="1.3"/><line x1="555.4" x2="555.4" y1="382.8" y2="394.8" stroke="#3ae03a" stroke-width="1.3"/><line x1="559.0" x2="559.0" y1="382.8" y2="394.8" stroke="#3ae03a" stroke-width="1.3"/><line x1="564.6" x2="564.6" y1="382.8" y2="394.8" stroke="#3ae03a" stroke-width="1.3"/><line x1="567.2" x2="567.2" y1="382.8" y2="394.8" stroke="#3ae03a" stroke-width="1.3"/><line x1="570.2" x2="570.2" y1="382.8" y2="394.8" stroke="#98f498" stroke-width="1.2"/><line x1="571.5" x2="571.5" y1="382.8" y2="394.8" stroke="#ffffff" stroke-width="1.0"/><line x1="573.5" x2="573.5" y1="382.8" y2="394.8" stroke="#ffffff" stroke-width="1.0"/><line x1="576.6" x2="576.6" y1="382.8" y2="394.8" stroke="#98f498" stroke-width="1.2"/><line x1="578.8" x2="578.8" y1="382.8" y2="394.8" stroke="#3ae03a" stroke-width="1.3"/><line x1="581.0" x2="581.0" y1="382.8" y2="394.8" stroke="#3ae03a" stroke-width="1.3"/><line x1="583.2" x2="583.2" y1="382.8" y2="394.8" stroke="#22aa22" stroke-width="1.6"/><line x1="585.4" x2="585.4" y1="382.8" y2="394.8" stroke="#3ae03a" stroke-width="1.3"/><line x1="588.5" x2="588.5" y1="382.8" y2="394.8" stroke="#ffffff" stroke-width="1.0"/><line x1="591.4" x2="591.4" y1="382.8" y2="394.8" stroke="#22aa22" stroke-width="1.6"/><line x1="593.5" x2="593.5" y1="382.8" y2="394.8" stroke="#ffffff" stroke-width="1.0"/><line x1="596.7" x2="596.7" y1="382.8" y2="394.8" stroke="#3ae03a" stroke-width="1.3"/><line x1="598.5" x2="598.5" y1="382.8" y2="394.8" stroke="#ffffff" stroke-width="1.0"/><line x1="601.4" x2="601.4" y1="382.8" y2="394.8" stroke="#22aa22" stroke-width="1.6"/><line x1="605.0" x2="605.0" y1="382.8" y2="394.8" stroke="#3ae03a" stroke-width="1.3"/><line x1="606.5" x2="606.5" y1="382.8" y2="394.8" stroke="#ffffff" stroke-width="1.0"/><line x1="597.5" x2="597.5" y1="382.8" y2="394.8" stroke="#ffffff" stroke-width="1.4"/><line x1="599.0" x2="599.0" y1="382.8" y2="394.8" stroke="#98f498" stroke-width="1.4"/><line x1="600.5" x2="600.5" y1="382.8" y2="394.8" stroke="#98f498" stroke-width="1.4"/><line x1="602.0" x2="602.0" y1="382.8" y2="394.8" stroke="#ffffff" stroke-width="1.4"/><line x1="603.5" x2="603.5" y1="382.8" y2="394.8" stroke="#98f498" stroke-width="1.4"/></g>
<g stroke="#fff" stroke-width="1.1" fill="none" stroke-linejoin="round" shape-rendering="crispEdges"><polyline points="48.3,417.0 51.0,417.3 55.0,419.0 116.0,419.0 119.0,417.5 123.0,414.6 126.0,416.3 129.0,416.8 132.0,417.5 134.0,419.0 135.8,421.6 137.5,418.0 139.0,415.0 140.5,413.2 142.0,416.0 143.0,414.0 144.0,404.0 145.0,401.0 146.0,404.0 147.0,418.0 147.6,430.0 148.2,430.0 148.8,415.0 149.6,405.0 150.5,403.3 151.5,408.0 152.5,414.0 154.0,417.0 156.0,418.2 159.5,418.7 175.0,418.7 178.0,418.0 181.0,418.8 190.0,418.8 192.0,418.2 195.5,418.8"/><polyline points="217.0,418.0 218.6,418.5 220.2,418.2 221.8,418.5 223.4,418.6 225.0,417.8 226.6,417.7 228.2,418.9 229.8,418.1 231.4,418.0 233.0,419.1 234.6,418.4 236.2,418.9 237.8,418.4 239.4,418.6 241.0,417.9 242.6,418.6 244.2,418.9 245.8,418.4 247.4,418.7 249.0,418.6 250.6,417.8 252.2,418.8 253.8,418.5 256.0,418.5 258.0,417.0 259.7,415.2 261.0,417.6 263.0,418.6 265.0,418.7 266.6,419.0 268.2,418.3 269.8,418.8 271.4,418.3 273.0,419.0 274.6,418.9 276.2,417.9 277.8,417.9 279.4,418.0 281.0,419.0 282.6,418.3 284.2,418.6 285.8,418.1 287.4,418.4 289.0,418.2 290.6,418.2 292.2,418.5 293.8,418.5 295.4,418.9 297.0,418.6 298.6,419.0 300.2,418.9 301.8,419.1 303.4,418.6 305.0,417.9 306.6,418.9 308.2,419.0 309.8,419.0 312.0,418.5 314.0,418.0 315.0,420.0 315.6,428.0 316.2,428.0 316.8,412.0 317.3,404.5 317.9,412.0 318.6,428.0 319.3,441.0 319.8,441.0 320.3,415.0 320.8,405.0 321.4,412.0 322.2,426.0 322.8,431.0 323.4,424.0 324.3,418.0 325.2,416.3 326.5,418.0 329.0,418.2 330.6,417.6 332.2,417.9 333.8,419.0 335.4,419.3 337.0,417.3 338.6,418.7 340.2,417.3 341.8,418.9 343.4,418.0 345.0,419.3 346.6,419.6 348.2,418.4 349.8,419.6 351.4,417.9 353.0,417.4 354.6,418.6 356.2,417.3 357.8,417.7 359.4,418.2 361.0,418.7 362.6,417.6 364.2,417.3 365.8,419.3 367.4,418.0 369.0,419.5 370.6,419.4 372.2,418.1 373.8,418.3 375.4,418.4 377.0,418.7 378.6,418.6 380.2,418.5 381.8,418.7 383.4,419.5 385.0,418.4 386.6,418.2 388.2,418.9 389.8,417.8 391.4,417.9 393.0,419.5 394.6,418.5 396.2,418.5 397.8,417.2 399.4,418.2 401.0,418.6 402.6,417.2 404.2,418.7 405.8,418.7 407.4,417.3 409.0,418.7 410.6,418.3 412.2,418.8 413.8,418.0 415.4,418.9 417.0,419.0 418.6,417.3 420.2,417.3 421.8,418.8 423.4,419.5 425.0,417.8 426.6,418.3 428.2,418.6 429.8,418.0 431.4,418.1 433.0,418.0 434.6,418.1 436.2,418.6 437.8,417.9 439.4,418.1 441.0,419.2 442.6,417.0 444.2,418.6 445.8,419.1 447.4,417.8 449.0,417.6 450.6,419.3 452.2,417.6 453.8,417.4 455.4,418.2 457.0,419.0 458.6,417.2 460.2,417.9 461.8,417.9 463.4,419.4 465.0,418.2 466.6,419.5 468.2,417.4 469.8,417.9 471.4,418.9 473.0,419.6 474.6,418.3 476.2,417.6 477.8,417.2 479.4,418.5 481.5,418.4 483.0,417.5 484.0,414.8 484.6,418.0 485.2,422.6 485.8,419.0 487.0,417.2 488.0,418.6 489.0,418.5 490.5,416.5 491.5,415.5 492.3,419.0 492.9,422.5 493.5,419.0 494.5,416.5 495.5,418.0 497.0,419.8 498.5,416.8 499.5,418.4 500.2,417.7 501.8,417.9 503.4,418.1 505.0,418.2 506.6,418.1 508.2,419.7 509.8,417.4 511.4,416.9 513.0,419.7 514.6,419.6 516.2,419.9 517.8,418.2 519.4,419.8 521.0,419.7 522.6,417.6 524.2,419.1 525.8,419.4 527.4,418.9 529.0,418.5 530.6,417.8 532.2,417.9 533.8,417.6 535.4,417.1 537.0,418.7 538.6,417.8 540.2,419.3 541.8,417.0 543.4,419.6 545.0,419.0 546.6,419.7 548.2,419.6 549.8,419.6 550.5,418.3 552.0,417.4 553.5,415.8 554.5,416.2 555.5,419.2 557.0,418.2 559.4,418.9 561.0,418.5 562.6,418.1 564.2,419.7 565.8,418.7 567.4,417.9 569.0,417.6 570.6,419.5 572.2,418.3 573.8,419.3 575.4,417.9 577.0,417.5 578.6,418.5 580.2,419.4 581.8,417.4 583.4,419.3 585.0,419.7 586.6,419.3 588.2,419.4 589.8,416.9 591.4,418.8 593.0,419.5 594.6,417.0 596.2,417.7 597.8,417.7 599.4,418.5 601.0,418.2 602.6,418.3 604.2,419.2 605.8,416.9 607.4,417.0"/></g>
<g font-family="'Liberation Sans',sans-serif" font-size="7.6" fill="#dcdcdc"><text x="26.5" y="375.3">0.0</text><text x="26.5" y="322.7">0.1</text><text x="26.5" y="270.2">0.2</text><text x="26.5" y="217.6">0.3</text><text x="26.5" y="165.1">0.4</text><text x="26.5" y="112.5">0.5</text><text x="26.5" y="60.0">0.6</text><text x="26.5" y="421.3">0.0</text><text x="151.8" y="481" text-anchor="middle">5.0</text><text x="260.4" y="481" text-anchor="middle">10.0</text><text x="369.1" y="481" text-anchor="middle">15.0</text><text x="477.7" y="481" text-anchor="middle">20.0</text><text x="586.4" y="481" text-anchor="middle">25.0</text></g>
</svg>
<div class="sb">
 <div class="sbb" style="left:0"><div class="arr" style="left:2.6px;top:1.6px;border-width:4.1px 6.2px 4.1px 0;border-color:transparent #000 transparent transparent"></div></div>
 <div class="thumb"></div>
 <div class="sbb" style="left:578.5px;width:11.5px"><div class="arr" style="left:4px;top:2.6px;border-width:3.2px 0 3.2px 4.8px;border-color:transparent transparent transparent #000"></div></div>
</div>
<div class="btn " style="left:619px;top:45.00px;width:73.5px"><u>Q</u>uit</div>
<div class="btn " style="left:619px;top:62.43px;width:73.5px">Print</div>
<div class="btn " style="left:619px;top:79.86px;width:73.5px">S<u>a</u>ve</div>
<div class="btn " style="left:619px;top:97.29px;width:34.5px">X-</div>
<div class="btn " style="left:658.5px;top:97.29px;width:34px">X+</div>
<div class="btn " style="left:619px;top:114.72px;width:73.5px">X <u>e</u>xactly</div>
<div class="btn " style="left:619px;top:132.15px;width:34.5px">Y-</div>
<div class="btn " style="left:658.5px;top:132.15px;width:34px">Y+</div>
<div class="btn dis" style="left:619px;top:149.58px;width:34.5px">P-</div>
<div class="btn " style="left:658.5px;top:149.58px;width:34px">P+</div>
<div class="btn " style="left:619px;top:167.01px;width:73.5px"><u>I</u>nfo</div>
<div class="btn " style="left:619px;top:184.44px;width:73.5px">Fit Y</div>
<div class="btn " style="left:619px;top:201.87px;width:73.5px">Sh<u>r</u>ink</div>
<div class="btn " style="left:619px;top:219.30px;width:73.5px">Default</div>
<div class="btn " style="left:619px;top:236.73px;width:73.5px">P<u>n</u>ts OFF</div>
<div class="btn " style="left:619px;top:254.16px;width:73.5px"><u>Z</u>ero ON</div>
<div class="btn " style="left:619px;top:271.59px;width:73.5px">Details ON</div>
<div class="btn " style="left:619px;top:289.02px;width:73.5px">Draw in d'<u>s</u></div>
<div class="btn " style="left:619px;top:306.45px;width:73.5px"><u>O</u>ptions</div>
<div class="btn focus" style="left:619px;top:393.70px;width:73.5px">Create new<i></i></div>
<div class="btn " style="left:619px;top:411.20px;width:73.5px">Backgroud OFF</div>
<div class="lab" style="left:619px;width:73.5px;text-align:center;top:329.5px">Go to 2th/hkl</div>
<div class="inp"></div>
<div class="lab" style="left:615.5px;top:378.8px;font-weight:bold;font-size:8.6px">Manual background:</div>
</div></body></html>
